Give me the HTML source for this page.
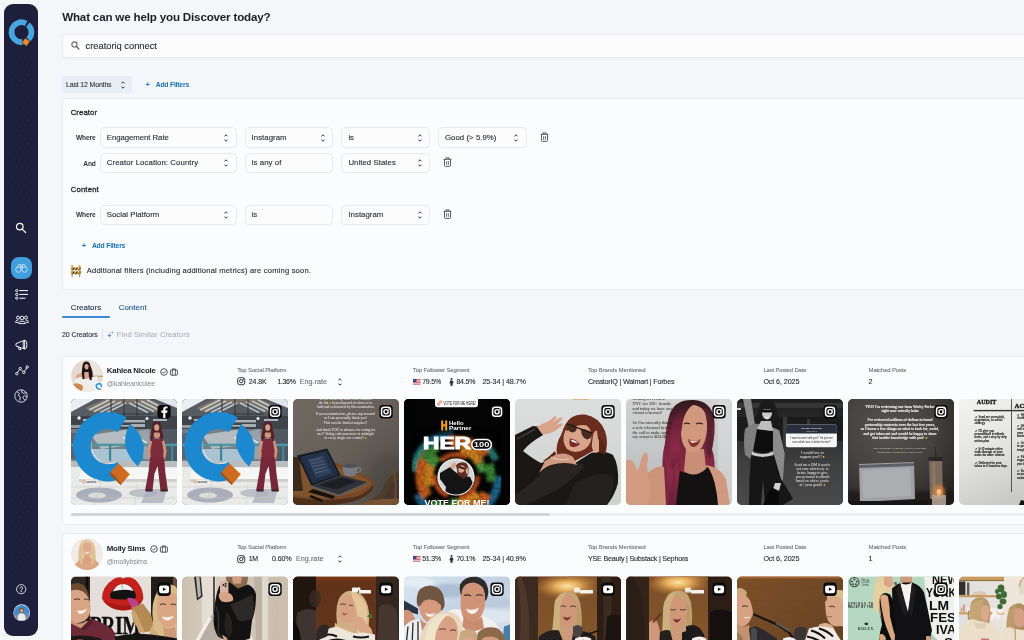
<!DOCTYPE html>
<html lang="en">
<head>
<meta charset="utf-8">
<title>Discover</title>
<style>
*{box-sizing:border-box;margin:0;padding:0}
html,body{width:1024px;height:640px;overflow:hidden;background:#f5f6fa}
body{font-family:"Liberation Sans",sans-serif;-webkit-font-smoothing:antialiased}
#app{will-change:transform;position:relative;width:1024px;height:640px;overflow:hidden;background:#f5f6fa}
.t{position:absolute;white-space:nowrap;-webkit-text-stroke:0.12px currentColor}
.b{position:absolute}
.sel{position:absolute;background:#fcfcfd;border:1px solid #e8eaee;border-radius:4.5px;box-shadow:0 0.5px 1px rgba(16,24,40,.025)}
.card{position:absolute;background:#fbfcfd;border:1px solid #e9ebef;border-radius:4px}
svg{position:absolute;overflow:visible}
.ph{position:absolute;width:106px;height:106.3px;border-radius:5px;overflow:hidden}
.ph svg{left:0;top:0}

</style>
</head>
<body>
<div id="app">
<div class="b" style="left:4px;top:4px;width:34.3px;height:632px;border-radius:9px;background:#1e1f3b"></div>
<svg style="left:4px;top:4px" width="34" height="632" viewBox="0 0 34 632">
<defs><pattern id="sdots" width="6" height="9" patternUnits="userSpaceOnUse" patternTransform="rotate(-8)"><circle cx="1.5" cy="1.5" r="0.45" fill="#3c5a56"/><circle cx="4.5" cy="6" r="0.45" fill="#3c5a56"/></pattern></defs>
<rect x="6" y="50" width="24" height="160" fill="url(#sdots)" opacity=".55"/>
<rect x="6" y="410" width="24" height="160" fill="url(#sdots)" opacity=".55"/>
</svg>
<svg style="left:0;top:0" width="40" height="50" viewBox="0 0 40 50" fill="none" stroke="#47a6e0" stroke-width="5.7">
<path d="M26.17 23.41 A9.95 9.95 0 1 0 22.54 42.10"/>
<path d="M27.90 24.58 A9.95 9.95 0 0 1 28.41 39.36"/>
<rect x="-3" y="-3" width="6" height="6" transform="translate(25.89 42.07) rotate(35)" fill="#f28a2c" stroke="#1e1f3b" stroke-width="0.5"/>
</svg>
<svg style="left:15.2px;top:222.1px" width="12" height="12" viewBox="0 0 12 12" fill="none" stroke="#fff" stroke-width="1.2" stroke-linecap="round">
<circle cx="4.8" cy="4.6" r="3.3"/><path d="M7.4 7.3 L10.6 10.5"/></svg>
<div class="b" style="left:10.8px;top:257.3px;width:21.3px;height:21.4px;border-radius:8px;background:#3f9edb"></div>
<svg style="left:15px;top:262.5px" width="13" height="11" viewBox="0 0 13 11" fill="none" stroke="#dcecf8" stroke-width="0.8">
<circle cx="3.4" cy="6.6" r="2.7"/><circle cx="9.6" cy="6.6" r="2.7"/><path d="M2.2 4.2 L3.8 1.4 L5.6 1.4 L5.9 5 M10.8 4.2 L9.2 1.4 L7.4 1.4 L7.1 5 M5.6 3 H7.4"/></svg>
<svg style="left:14.5px;top:288.5px" width="14" height="11" viewBox="0 0 14 11" fill="none" stroke="#fff" stroke-width="1">
<circle cx="1.7" cy="1.6" r="1.1"/><circle cx="1.7" cy="5.4" r="1.1"/><circle cx="1.7" cy="9.2" r="1.1"/>
<path d="M4.3 1.6 H13 M4.3 5.4 H13 M4.3 9.2 H10.5"/></svg>
<svg style="left:14.5px;top:314.5px" width="14" height="10" viewBox="0 0 14 10" fill="none" stroke="#fff" stroke-width="0.9">
<circle cx="7" cy="3" r="1.8"/><circle cx="3" cy="2.6" r="1.5"/><circle cx="11" cy="2.6" r="1.5"/>
<path d="M3.6 8.6 C3.6 5.4 10.4 5.4 10.4 8.6 Z M3.4 5.2 C1.4 5 0.6 6 0.6 7.4 H3.4 M10.6 5.2 C12.6 5 13.4 6 13.4 7.4 H10.6"/></svg>
<svg style="left:14.5px;top:339px" width="14" height="12" viewBox="0 0 14 12" fill="none" stroke="#fff" stroke-width="0.9" stroke-linejoin="round">
<path d="M1 4.6 L9.6 1.2 V10 L1 7 Z M3.2 7.8 L4 10.6 H5.8 L5.2 8.4"/><ellipse cx="10" cy="5.6" rx="1.9" ry="4.4"/></svg>
<svg style="left:14.5px;top:365px" width="14" height="11" viewBox="0 0 14 11" fill="none" stroke="#fff" stroke-width="0.9">
<circle cx="1.8" cy="8.6" r="1.2"/><circle cx="5.2" cy="3.6" r="1.2"/><circle cx="8.8" cy="7.4" r="1.2"/><circle cx="12.2" cy="2" r="1.2"/>
<path d="M2.5 7.6 L4.5 4.6 M6 4.5 L8 6.5 M9.5 6.4 L11.5 3"/></svg>
<svg style="left:14.3px;top:389.3px" width="14" height="14" viewBox="0 0 14 14" fill="none" stroke="#fff" stroke-width="0.8">
<circle cx="7" cy="7" r="6.2"/><path d="M3 2.6 L5.4 4.4 L4.2 6.4 L6.4 8 L5.6 11.6 M8.2 1 L7.6 3.2 L9.8 4.4 L12.4 3.6 M12.8 8 L10.4 6.6 L8.8 8.2 L10.2 10.6 L11.4 11"/></svg>
<svg style="left:16.3px;top:583.6px" width="11" height="11" viewBox="0 0 11 11" fill="none" stroke="#fff" stroke-width="0.8">
<circle cx="5.2" cy="5.2" r="4.6"/><path d="M3.9 4.1 C3.9 2.3 6.6 2.3 6.6 4.1 C6.6 5.2 5.2 5.2 5.2 6.4" stroke-linecap="round"/><circle cx="5.2" cy="7.8" r="0.3" fill="#fff"/></svg>
<svg style="left:12.7px;top:603.5px" width="18" height="18" viewBox="0 0 18 18">
<defs><clipPath id="uav"><circle cx="8.7" cy="8.7" r="7.8"/></clipPath></defs>
<circle cx="8.7" cy="8.7" r="8.4" fill="#e8eef5"/>
<g clip-path="url(#uav)"><rect width="18" height="18" fill="#3f8fd0"/><rect y="10" width="18" height="8" fill="#6c8fae"/>
<ellipse cx="8.6" cy="14" rx="4" ry="5" fill="#efe9e2"/><ellipse cx="8.7" cy="6.4" rx="2.4" ry="2.8" fill="#7a5a42"/><ellipse cx="8.7" cy="6.8" rx="1.5" ry="1.8" fill="#d9a98a"/></g></svg>
<div class="t " style="left:62.20px;top:9.00px;font-size:11.6px;line-height:16px;color:#1b1d21;font-weight:700;-webkit-text-stroke:0;letter-spacing:-0.174px;">What can we help you Discover today?</div>
<div class="sel" style="left:62px;top:34px;width:980px;height:23.5px;border-radius:4px"></div>
<svg style="left:70.6px;top:40.7px" width="9" height="9" viewBox="0 0 9 9" fill="none" stroke="#646b76" stroke-width="1.15" stroke-linecap="round">
<circle cx="3.4" cy="3.4" r="2.6"/><path d="M5.5 5.5 L7.9 7.9" stroke-width="1.4"/></svg>
<div class="t " style="left:85.60px;top:39.10px;font-size:9.4px;line-height:13px;color:#2a2e35;letter-spacing:-0.036px;">creatoriq connect</div>
<div class="b" style="left:62px;top:75.7px;width:69.5px;height:17.6px;border-radius:3px;background:#e9edf4"></div>
<div class="t " style="left:66.00px;top:79.50px;font-size:6.9px;line-height:10px;color:#30353d;letter-spacing:-0.120px;">Last 12 Months</div>
<svg style="left:120.2px;top:79.5px" width="6" height="10" viewBox="0 0 6 10" fill="none" stroke="#2f343b" stroke-width="1" stroke-linecap="round" stroke-linejoin="round"><path d="M1.75 3.05 L3 1.8 L4.25 3.05 M1.75 6.95 L3 8.2 L4.25 6.95"/></svg>
<div class="t " style="left:145.50px;top:78.80px;font-size:7.6px;line-height:11px;color:#1f7abf;font-weight:700;-webkit-text-stroke:0;">+</div>
<div class="t " style="left:155.70px;top:79.50px;font-size:6.8px;line-height:10px;color:#1873b6;font-weight:700;-webkit-text-stroke:0;letter-spacing:-0.201px;">Add Filters</div>
<div class="card" style="left:62px;top:98px;width:980px;height:191.5px"></div>
<div class="t " style="left:70.70px;top:106.80px;font-size:7.7px;line-height:11px;color:#1f2328;letter-spacing:0.118px;-webkit-text-stroke:0.3px currentColor;">Creator</div>
<div class="t " style="left:70.70px;top:184.40px;font-size:7.7px;line-height:11px;color:#1f2328;letter-spacing:0.190px;-webkit-text-stroke:0.3px currentColor;">Content</div>
<div class="t " style="left:75.90px;top:132.90px;font-size:6.6px;line-height:9px;color:#30343b;font-weight:700;-webkit-text-stroke:0;letter-spacing:-0.114px;">Where</div>
<div class="t " style="left:83.30px;top:158.80px;font-size:6.6px;line-height:9px;color:#30343b;font-weight:700;-webkit-text-stroke:0;letter-spacing:-0.177px;">And</div>
<div class="t " style="left:75.90px;top:210.30px;font-size:6.6px;line-height:9px;color:#30343b;font-weight:700;-webkit-text-stroke:0;letter-spacing:-0.114px;">Where</div>
<div class="sel" style="left:100.2px;top:127.35px;width:136.4px;height:20.3px"></div>
<div class="t " style="left:106.80px;top:132.10px;font-size:7.8px;line-height:11px;color:#2b2f36;letter-spacing:-0.059px;">Engagement Rate</div>
<svg style="left:223.40000000000003px;top:132.6px" width="6" height="10" viewBox="0 0 6 10" fill="none" stroke="#2f343b" stroke-width="1" stroke-linecap="round" stroke-linejoin="round"><path d="M1.75 3.05 L3 1.8 L4.25 3.05 M1.75 6.95 L3 8.2 L4.25 6.95"/></svg>
<div class="sel" style="left:245px;top:127.35px;width:87.8px;height:20.3px"></div>
<div class="t " style="left:251.60px;top:132.10px;font-size:7.8px;line-height:11px;color:#2b2f36;letter-spacing:0.035px;">Instagram</div>
<svg style="left:319.6px;top:132.6px" width="6" height="10" viewBox="0 0 6 10" fill="none" stroke="#2f343b" stroke-width="1" stroke-linecap="round" stroke-linejoin="round"><path d="M1.75 3.05 L3 1.8 L4.25 3.05 M1.75 6.95 L3 8.2 L4.25 6.95"/></svg>
<div class="sel" style="left:341.2px;top:127.35px;width:88.8px;height:20.3px"></div>
<div class="t " style="left:348.40px;top:132.10px;font-size:7.8px;line-height:11px;color:#2b2f36;letter-spacing:-0.017px;">is</div>
<svg style="left:416.8px;top:132.6px" width="6" height="10" viewBox="0 0 6 10" fill="none" stroke="#2f343b" stroke-width="1" stroke-linecap="round" stroke-linejoin="round"><path d="M1.75 3.05 L3 1.8 L4.25 3.05 M1.75 6.95 L3 8.2 L4.25 6.95"/></svg>
<div class="sel" style="left:437.8px;top:127.35px;width:88.8px;height:20.3px"></div>
<div class="t " style="left:445.00px;top:132.10px;font-size:7.8px;line-height:11px;color:#2b2f36;letter-spacing:0.043px;">Good (&gt; 5.9%)</div>
<svg style="left:513.4px;top:132.6px" width="6" height="10" viewBox="0 0 6 10" fill="none" stroke="#2f343b" stroke-width="1" stroke-linecap="round" stroke-linejoin="round"><path d="M1.75 3.05 L3 1.8 L4.25 3.05 M1.75 6.95 L3 8.2 L4.25 6.95"/></svg>
<svg style="left:539.5px;top:131.8px" width="9" height="10" viewBox="0 0 9 10" fill="none" stroke="#3a3f47" stroke-width="0.85" stroke-linejoin="round">
<path d="M0.6 2.3 H8.4 M3 2.2 V0.9 H6 V2.2 M1.5 2.4 V8.4 Q1.5 9.4 2.5 9.4 H6.5 Q7.5 9.4 7.5 8.4 V2.4"/><path d="M3.6 4.2 V7.8 M5.4 4.2 V7.8" stroke-width="0.75"/></svg>
<div class="sel" style="left:100.2px;top:152.80px;width:136.4px;height:20.3px"></div>
<div class="t " style="left:106.80px;top:156.85px;font-size:7.8px;line-height:11px;color:#2b2f36;letter-spacing:0.087px;">Creator Location: Country</div>
<svg style="left:223.40000000000003px;top:158.04999999999998px" width="6" height="10" viewBox="0 0 6 10" fill="none" stroke="#2f343b" stroke-width="1" stroke-linecap="round" stroke-linejoin="round"><path d="M1.75 3.05 L3 1.8 L4.25 3.05 M1.75 6.95 L3 8.2 L4.25 6.95"/></svg>
<div class="sel" style="left:245px;top:152.80px;width:87.8px;height:20.3px"></div>
<div class="t " style="left:251.60px;top:156.85px;font-size:7.8px;line-height:11px;color:#2b2f36;letter-spacing:0.106px;">is any of</div>
<div class="sel" style="left:341.2px;top:152.80px;width:88.8px;height:20.3px"></div>
<div class="t " style="left:348.40px;top:156.85px;font-size:7.8px;line-height:11px;color:#2b2f36;letter-spacing:0.052px;">United States</div>
<svg style="left:416.8px;top:158.04999999999998px" width="6" height="10" viewBox="0 0 6 10" fill="none" stroke="#2f343b" stroke-width="1" stroke-linecap="round" stroke-linejoin="round"><path d="M1.75 3.05 L3 1.8 L4.25 3.05 M1.75 6.95 L3 8.2 L4.25 6.95"/></svg>
<svg style="left:442.8px;top:157.25px" width="9" height="10" viewBox="0 0 9 10" fill="none" stroke="#3a3f47" stroke-width="0.85" stroke-linejoin="round">
<path d="M0.6 2.3 H8.4 M3 2.2 V0.9 H6 V2.2 M1.5 2.4 V8.4 Q1.5 9.4 2.5 9.4 H6.5 Q7.5 9.4 7.5 8.4 V2.4"/><path d="M3.6 4.2 V7.8 M5.4 4.2 V7.8" stroke-width="0.75"/></svg>
<div class="sel" style="left:100.2px;top:204.55px;width:136.4px;height:20.3px"></div>
<div class="t " style="left:106.80px;top:209.30px;font-size:7.8px;line-height:11px;color:#2b2f36;letter-spacing:0.003px;">Social Platform</div>
<svg style="left:223.40000000000003px;top:209.79999999999998px" width="6" height="10" viewBox="0 0 6 10" fill="none" stroke="#2f343b" stroke-width="1" stroke-linecap="round" stroke-linejoin="round"><path d="M1.75 3.05 L3 1.8 L4.25 3.05 M1.75 6.95 L3 8.2 L4.25 6.95"/></svg>
<div class="sel" style="left:245px;top:204.55px;width:87.8px;height:20.3px"></div>
<div class="t " style="left:251.60px;top:209.30px;font-size:7.8px;line-height:11px;color:#2b2f36;letter-spacing:-0.017px;">is</div>
<div class="sel" style="left:341.2px;top:204.55px;width:88.8px;height:20.3px"></div>
<div class="t " style="left:348.40px;top:209.30px;font-size:7.8px;line-height:11px;color:#2b2f36;letter-spacing:0.035px;">Instagram</div>
<svg style="left:416.8px;top:209.79999999999998px" width="6" height="10" viewBox="0 0 6 10" fill="none" stroke="#2f343b" stroke-width="1" stroke-linecap="round" stroke-linejoin="round"><path d="M1.75 3.05 L3 1.8 L4.25 3.05 M1.75 6.95 L3 8.2 L4.25 6.95"/></svg>
<svg style="left:442.8px;top:209.0px" width="9" height="10" viewBox="0 0 9 10" fill="none" stroke="#3a3f47" stroke-width="0.85" stroke-linejoin="round">
<path d="M0.6 2.3 H8.4 M3 2.2 V0.9 H6 V2.2 M1.5 2.4 V8.4 Q1.5 9.4 2.5 9.4 H6.5 Q7.5 9.4 7.5 8.4 V2.4"/><path d="M3.6 4.2 V7.8 M5.4 4.2 V7.8" stroke-width="0.75"/></svg>
<div class="t " style="left:81.70px;top:239.80px;font-size:7.6px;line-height:11px;color:#1f7abf;font-weight:700;-webkit-text-stroke:0;">+</div>
<div class="t " style="left:91.90px;top:240.50px;font-size:6.8px;line-height:10px;color:#1873b6;font-weight:700;-webkit-text-stroke:0;letter-spacing:-0.201px;">Add Filters</div>
<svg style="left:70.4px;top:264.6px" width="11.8" height="12.6" viewBox="0 0 11 12">
<rect x="0.6" y="2.4" width="9.8" height="2.6" fill="#f3b62e"/><rect x="0.6" y="6.2" width="9.8" height="2.6" fill="#f3b62e"/>
<path d="M1.6 5 L3.2 2.4 H4.6 L3 5 Z M4.6 5 L6.2 2.4 H7.6 L6 5 Z M7.6 5 L9.2 2.4 H10.4 L9 5 Z M1.6 8.8 L3.2 6.2 H4.6 L3 8.8 Z M4.6 8.8 L6.2 6.2 H7.6 L6 8.8 Z M7.6 8.8 L9.2 6.2 H10.4 L9 8.8 Z" fill="#3b2f1c"/>
<rect x="1.4" y="1.2" width="1" height="10.4" fill="#8a8d92"/><rect x="8.6" y="1.2" width="1" height="10.4" fill="#8a8d92"/>
<circle cx="1.9" cy="1" r="0.9" fill="#f0902a"/><circle cx="9.1" cy="1" r="0.9" fill="#f0902a"/></svg>
<div class="t " style="left:86.80px;top:265.40px;font-size:7.6px;line-height:11px;color:#2b2f36;letter-spacing:0.182px;">Additional filters (including additional metrics) are coming soon.</div>
<div class="t " style="left:70.70px;top:302.10px;font-size:7.9px;line-height:11px;color:#22364f;letter-spacing:0.026px;">Creators</div>
<div class="t " style="left:118.70px;top:302.00px;font-size:7.9px;line-height:11px;color:#1f5f8e;letter-spacing:0.047px;">Content</div>
<div class="b" style="left:62px;top:316.2px;width:48px;height:1.8px;background:#3a8dd2;border-radius:1px"></div>
<div class="t " style="left:62.00px;top:329.70px;font-size:6.9px;line-height:10px;color:#30353d;letter-spacing:-0.023px;">20 Creators</div>
<div class="b" style="left:102px;top:328px;width:1px;height:12.5px;background:#dfe2e7"></div>
<svg style="left:107px;top:330.5px" width="7" height="7" viewBox="0 0 7 7" fill="#5f86c6">
<path d="M2.4 2.2 L3 4 L4.8 4.6 L3 5.2 L2.4 7 L1.8 5.2 L0 4.6 L1.8 4 Z M5.2 0.2 L5.55 1.25 L6.6 1.6 L5.55 1.95 L5.2 3 L4.85 1.95 L3.8 1.6 L4.85 1.25 Z"/></svg>
<div class="t " style="left:116.70px;top:328.90px;font-size:7.6px;line-height:11px;color:#a3a8b0;-webkit-text-stroke:0;letter-spacing:0.077px;">Find Similar Creators</div>
<div class="card" style="left:62px;top:355.8px;width:980px;height:169.6px"></div>
<div class="card" style="left:62px;top:533.2px;width:980px;height:169.6px"></div>
<div class="t " style="left:106.80px;top:365.20px;font-size:7.9px;line-height:11px;color:#1d2025;font-weight:700;-webkit-text-stroke:0;letter-spacing:-0.216px;">Kahlea Nicole</div>
<svg style="left:159.7px;top:367.5px" width="18" height="8" viewBox="0 0 18 8" fill="none" stroke="#2b2f36" stroke-width="0.8"><circle cx="4" cy="4" r="3.3"/><path d="M2.5 4.1 L3.6 5.2 L5.6 3" stroke-linecap="round"/><rect x="10.4" y="1.9" width="7" height="5.3" rx="0.8"/><path d="M12.6 1.9 V0.8 H15.2 V1.9 M12.4 1.9 V7.2 M15.4 1.9 V7.2" stroke-width="0.7"/></svg>
<div class="t " style="left:106.80px;top:379.00px;font-size:7.1px;line-height:10px;color:#858a93;-webkit-text-stroke:0;letter-spacing:-0.166px;">@kahleanicolee</div>
<div class="t " style="left:237.20px;top:366.10px;font-size:6.0px;line-height:8px;color:#727780;letter-spacing:-0.126px;">Top Social Platform</div>
<svg style="left:236.8px;top:377.40000000000003px" width="8.4" height="8.4" viewBox="0 0 10 10" fill="none" stroke="#2b2f36" stroke-width="1.15"><rect x="0.8" y="0.8" width="8.4" height="8.4" rx="2.4"/><circle cx="5" cy="5" r="2"/><circle cx="7.4" cy="2.6" r="0.35" fill="#2b2f36"/></svg>
<div class="t " style="left:248.80px;top:376.60px;font-size:7.0px;line-height:10px;color:#2b2f36;letter-spacing:-0.099px;">24.8K</div>
<div class="t " style="left:277.50px;top:376.60px;font-size:7.0px;line-height:10px;color:#2b2f36;letter-spacing:-0.370px;">1.36%</div>
<div class="t " style="left:299.70px;top:376.60px;font-size:7.2px;line-height:10px;color:#6a7079;letter-spacing:0.035px;">Eng.rate</div>
<svg style="left:336.7px;top:376.6px" width="6" height="10" viewBox="0 0 6 10" fill="none" stroke="#2f343b" stroke-width="1" stroke-linecap="round" stroke-linejoin="round"><path d="M1.75 3.05 L3 1.8 L4.25 3.05 M1.75 6.95 L3 8.2 L4.25 6.95"/></svg>
<div class="t " style="left:412.80px;top:366.10px;font-size:6.0px;line-height:8px;color:#727780;letter-spacing:-0.160px;">Top Follower Segment</div>
<svg style="left:412.8px;top:378.8px" width="7.6" height="5.6" viewBox="0 0 7.6 5.6"><rect width="7.6" height="5.6" fill="#f3f1f0"/><path d="M0 0.4 H7.6 M0 2 H7.6 M0 3.6 H7.6 M0 5.2 H7.6" stroke="#c8394b" stroke-width="0.8"/><rect width="3.4" height="3" fill="#3b4a86"/></svg>
<div class="t " style="left:422.20px;top:376.60px;font-size:7.0px;line-height:10px;color:#2b2f36;letter-spacing:-0.230px;">79.5%</div>
<svg style="left:449.3px;top:377.6px" width="5" height="8" viewBox="0 0 5 8" fill="#2b2f36"><circle cx="2.5" cy="1" r="1"/><path d="M1.2 2.4 H3.8 L4.6 5.2 H3.6 V7.8 H1.4 V5.2 H0.4 Z"/></svg>
<div class="t " style="left:456.40px;top:376.60px;font-size:7.0px;line-height:10px;color:#2b2f36;letter-spacing:-0.210px;">84.5%</div>
<div class="t " style="left:482.40px;top:376.60px;font-size:7.2px;line-height:10px;color:#2b2f36;letter-spacing:-0.092px;">25-34 | 48.7%</div>
<div class="t " style="left:588.00px;top:366.10px;font-size:6.0px;line-height:8px;color:#727780;letter-spacing:-0.127px;">Top Brands Mentioned</div>
<div class="t " style="left:588.00px;top:376.60px;font-size:7.2px;line-height:10px;color:#2b2f36;letter-spacing:-0.207px;">CreatorIQ | Walmart | Forbes</div>
<div class="t " style="left:763.40px;top:366.10px;font-size:6.0px;line-height:8px;color:#727780;letter-spacing:-0.189px;">Last Posted Date</div>
<div class="t " style="left:763.40px;top:376.60px;font-size:7.2px;line-height:10px;color:#2b2f36;letter-spacing:-0.111px;">Oct 6, 2025</div>
<div class="t " style="left:868.60px;top:366.10px;font-size:6.0px;line-height:8px;color:#727780;letter-spacing:-0.160px;">Matched Posts</div>
<div class="t " style="left:868.60px;top:376.60px;font-size:7.2px;line-height:10px;color:#2b2f36;">2</div>
<div class="t " style="left:106.80px;top:543.10px;font-size:7.9px;line-height:11px;color:#1d2025;font-weight:700;-webkit-text-stroke:0;letter-spacing:-0.257px;">Molly Sims</div>
<svg style="left:149.8px;top:545.4000000000001px" width="18" height="8" viewBox="0 0 18 8" fill="none" stroke="#2b2f36" stroke-width="0.8"><circle cx="4" cy="4" r="3.3"/><path d="M2.5 4.1 L3.6 5.2 L5.6 3" stroke-linecap="round"/><rect x="10.4" y="1.9" width="7" height="5.3" rx="0.8"/><path d="M12.6 1.9 V0.8 H15.2 V1.9 M12.4 1.9 V7.2 M15.4 1.9 V7.2" stroke-width="0.7"/></svg>
<div class="t " style="left:106.80px;top:556.90px;font-size:7.1px;line-height:10px;color:#858a93;-webkit-text-stroke:0;letter-spacing:-0.183px;">@mollybsims</div>
<div class="t " style="left:237.20px;top:543.30px;font-size:6.0px;line-height:8px;color:#727780;letter-spacing:-0.126px;">Top Social Platform</div>
<svg style="left:236.8px;top:554.5999999999999px" width="8.4" height="8.4" viewBox="0 0 10 10" fill="none" stroke="#2b2f36" stroke-width="1.15"><rect x="0.8" y="0.8" width="8.4" height="8.4" rx="2.4"/><circle cx="5" cy="5" r="2"/><circle cx="7.4" cy="2.6" r="0.35" fill="#2b2f36"/></svg>
<div class="t " style="left:248.80px;top:553.80px;font-size:7.0px;line-height:10px;color:#2b2f36;letter-spacing:-0.562px;">1M</div>
<div class="t " style="left:272.00px;top:553.80px;font-size:7.0px;line-height:10px;color:#2b2f36;letter-spacing:-0.050px;">0.60%</div>
<div class="t " style="left:296.00px;top:553.80px;font-size:7.2px;line-height:10px;color:#6a7079;letter-spacing:0.035px;">Eng.rate</div>
<svg style="left:336.7px;top:553.8px" width="6" height="10" viewBox="0 0 6 10" fill="none" stroke="#2f343b" stroke-width="1" stroke-linecap="round" stroke-linejoin="round"><path d="M1.75 3.05 L3 1.8 L4.25 3.05 M1.75 6.95 L3 8.2 L4.25 6.95"/></svg>
<div class="t " style="left:412.80px;top:543.30px;font-size:6.0px;line-height:8px;color:#727780;letter-spacing:-0.160px;">Top Follower Segment</div>
<svg style="left:412.8px;top:556.0px" width="7.6" height="5.6" viewBox="0 0 7.6 5.6"><rect width="7.6" height="5.6" fill="#f3f1f0"/><path d="M0 0.4 H7.6 M0 2 H7.6 M0 3.6 H7.6 M0 5.2 H7.6" stroke="#c8394b" stroke-width="0.8"/><rect width="3.4" height="3" fill="#3b4a86"/></svg>
<div class="t " style="left:422.20px;top:553.80px;font-size:7.0px;line-height:10px;color:#2b2f36;letter-spacing:-0.230px;">51.3%</div>
<svg style="left:449.3px;top:554.8px" width="5" height="8" viewBox="0 0 5 8" fill="#2b2f36"><circle cx="2.5" cy="1" r="1"/><path d="M1.2 2.4 H3.8 L4.6 5.2 H3.6 V7.8 H1.4 V5.2 H0.4 Z"/></svg>
<div class="t " style="left:456.40px;top:553.80px;font-size:7.0px;line-height:10px;color:#2b2f36;letter-spacing:-0.210px;">70.1%</div>
<div class="t " style="left:482.40px;top:553.80px;font-size:7.2px;line-height:10px;color:#2b2f36;letter-spacing:-0.092px;">25-34 | 40.9%</div>
<div class="t " style="left:588.00px;top:543.30px;font-size:6.0px;line-height:8px;color:#727780;letter-spacing:-0.127px;">Top Brands Mentioned</div>
<div class="t " style="left:588.00px;top:553.80px;font-size:7.2px;line-height:10px;color:#2b2f36;letter-spacing:-0.239px;">YSE Beauty | Substack | Sephora</div>
<div class="t " style="left:763.40px;top:543.30px;font-size:6.0px;line-height:8px;color:#727780;letter-spacing:-0.189px;">Last Posted Date</div>
<div class="t " style="left:763.40px;top:553.80px;font-size:7.2px;line-height:10px;color:#2b2f36;letter-spacing:-0.111px;">Oct 6, 2025</div>
<div class="t " style="left:868.60px;top:543.30px;font-size:6.0px;line-height:8px;color:#727780;letter-spacing:-0.160px;">Matched Posts</div>
<div class="t " style="left:868.60px;top:553.80px;font-size:7.2px;line-height:10px;color:#2b2f36;">1</div>
<div class="b" style="left:71px;top:513px;width:971px;height:2.6px;border-radius:1.3px;background:#eceef1"></div>
<div class="b" style="left:71px;top:513px;width:478.5px;height:2.6px;border-radius:1.3px;background:#d0d3d8"></div>
<svg width="0" height="0" style="left:0;top:0"><defs>
<filter id="b1" x="-20%" y="-20%" width="140%" height="140%"><feGaussianBlur stdDeviation="0.6"/></filter>
<filter id="b2" x="-30%" y="-30%" width="160%" height="160%"><feGaussianBlur stdDeviation="1.4"/></filter>
<filter id="b3" x="-40%" y="-40%" width="180%" height="180%"><feGaussianBlur stdDeviation="3"/></filter>
<filter id="b4" x="-50%" y="-50%" width="200%" height="200%"><feGaussianBlur stdDeviation="6"/></filter>
</defs></svg>
<div class="ph" style="left:71px;top:399px;background:#9aa3ab"><svg width="106" height="106" viewBox="0 0 106 106"><rect width="106" height="106" fill="#8d979f"/>
<rect width="106" height="40" fill="#565c63"/>
<path d="M0 0 H24 L0 13 Z" fill="#e9eef2"/>
<path d="M84 0 H106 V9 Z" fill="#dfe6ea"/>
<path d="M14 9 L34 0 H78 L100 10 L88 15 L70 5 H42 L24 14 Z" fill="#7d7467"/>
<g stroke="#d3dadf" stroke-width="1.5" opacity=".85"><path d="M18 11 L38 1 M23 12.5 L44 2 M29 13.5 L50 3 M35 14 L55 4 M58 4 L77 13.5 M64 3 L83 12.5 M70 2 L89 11.5 M76 1 L95 10.5"/></g>
<g stroke="#33373c" stroke-width="1.1"><path d="M40 0 V17 M53 0 V19 M66 0 V17 M28 15 H82"/></g>
<rect x="0" y="17" width="106" height="15" fill="#3f444b"/>
<g fill="#c9d0d5" opacity=".8"><rect x="12" y="20" width="20" height="2"/><rect x="44" y="21" width="30" height="2.4"/><rect x="82" y="20" width="14" height="2"/><rect x="20" y="26" width="40" height="1.6"/></g>
<g fill="#f0f3f5"><circle cx="8" cy="19" r="1.7"/><circle cx="76" cy="19.5" r="1.5"/><rect x="60" y="25" width="14" height="3" opacity=".6"/><rect x="0" y="26" width="10" height="3" opacity=".5"/></g>
<rect x="0" y="30" width="106" height="34" fill="#747e86"/>
<g filter="url(#b1)">
<path d="M20 36 L60 30 L78 44 L30 50 Z" fill="#b4bcc2"/>
<path d="M0 34 H18 V60 H0 Z" fill="#5b646c"/>
<path d="M58 34 L78 30 L80 60 L60 60 Z" fill="#98a2a9"/>
<rect x="92" y="30" width="14" height="32" fill="#4f5860"/>
<rect x="20" y="50" width="50" height="12" fill="#a9c3d3"/>
<path d="M60 34 L76 44 M56 36 L72 46 M52 38 L68 48" stroke="#eef2f4" stroke-width="1.2"/>
</g>
<rect x="0" y="44.6" width="106" height="2.6" fill="#4f97a4"/>
<g fill="#3f8794"><rect x="38" y="46" width="2.2" height="18"/><rect x="70" y="46" width="2.2" height="18"/><rect x="100" y="46" width="2.4" height="18"/><rect x="14" y="46" width="2" height="18"/></g>
<rect x="0" y="62" width="106" height="44" fill="#e9e9e7"/>
<rect x="0" y="62" width="106" height="6" fill="#b9bdbf"/>
<path d="M10 69 H106 V80 H8 Z" fill="#f6f6f4"/>
<path d="M8 80 H106 V83 H8 Z" fill="#cfcfcd"/>
<g filter="url(#b1)" fill="#a9aebb">
<ellipse cx="28" cy="96" rx="23" ry="7.5"/>
<ellipse cx="72" cy="94" rx="14" ry="4" opacity=".7"/>
<path d="M76 90 L96 90 L92 104 L70 104 Z" opacity=".75"/>
</g>
<ellipse cx="26" cy="96.5" rx="9" ry="3" fill="#dbdbd8" filter="url(#b1)"/>
<g stroke="#c4c4c0" stroke-width=".5"><path d="M0 88 H106 M0 99 H106 M30 84 L24 106 M66 84 L64 106"/></g>
<!-- big C -->
<path d="M55.8 18.6 A34.7 34.7 0 1 0 54.5 77.6 L46 62.6 A17.6 17.6 0 1 1 46.6 32.9 Z" fill="#1c88d0"/>
<path d="M45.8 62.3 A17.4 17.4 0 0 1 21.6 40 A19 19 0 0 0 45 64 Z" fill="#eaf3fa" opacity=".9"/>
<path d="M59 25 Q70 33 72.8 47 Q73 58 67 67.6 Q57 58 54.2 47 Q53.6 36 59 25 Z" fill="#1c88d0"/>
<path d="M59 25 Q53.6 36 54.2 47 Q52.6 36 59 25 Z" fill="#1576b8"/>
<path d="M47.6 64.4 L58.8 75.2 L51 84.6 L39.4 73 Z" fill="#cf6a1e"/>
<path d="M39.4 73 L51 84.6 L49.6 86 L38.4 75 Z" fill="#a84f12"/>
<rect x="11" y="80.5" width="16" height="4" fill="#efefec"/>
<circle cx="13" cy="82.4" r="1.4" fill="none" stroke="#d2792e" stroke-width=".7"/>
<text x="15.4" y="83.6" font-size="2.6" font-weight="700" fill="#33475a" font-family="Liberation Sans, sans-serif">connect</text>
<!-- woman -->
<g>
<path d="M81.4 29 Q80.6 22.4 85.6 22.2 Q90.8 22.4 90.2 29 Q92.8 35 92.2 43 L89 39 H82.6 L79.4 43 Q79 35 81.4 29 Z" fill="#55222a"/>
<ellipse cx="85.7" cy="28.6" rx="2.5" ry="3.3" fill="#cfa08c"/>
<path d="M79.4 38.4 Q85.6 41.6 92.2 38.4 L94.4 52 L93.2 60 Q86 62 78.8 60 L77.8 52 Z" fill="#7b2b3a"/>
<path d="M82.6 37.4 Q85.8 40.6 89.2 37.4 L88.6 33.4 H83 Z" fill="#c9957f"/>
<path d="M78.8 39.4 L76.2 52 L77.6 61 L79.8 60.6 L79.4 52 L81.2 42 Z M92.8 39.4 L95.6 52 L94 61 L92 60.6 L92.6 52 L90.8 42 Z" fill="#c9957f"/>
<path d="M79 58 Q86 60.6 93 58 L94.4 74 L96.8 91 H89.4 L86.6 67 L83.4 75 L81.6 91 H74.2 L77.6 72 Z" fill="#762838"/>
<path d="M74.4 90.6 H81.6 V92.4 H74.6 Z M89.4 90.6 H96.8 V92.4 H89.6 Z" fill="#3a2424"/>
<path d="M81.2 30 Q81.6 36 80.2 42 M90.4 30 Q90.2 36 91.6 42" stroke="#55222a" stroke-width="1.9" fill="none"/>
</g>
<rect x="86.4" y="6.1" width="13.3" height="13.3" rx="3.4" fill="#0b0b0c"/><path d="M94.4 18.9 V13.7 H96.2 L96.5 11.6 H94.4 V10.3 Q94.4 9.3 95.5 9.3 H96.6 V7.5 Q95.8 7.4 94.9 7.4 Q92.2 7.4 92.2 10.2 V11.6 H90.3 V13.7 H92.2 V18.9 Z" fill="#fff"/></svg></div>
<div class="ph" style="left:182px;top:399px;background:#9aa3ab"><svg width="106" height="106" viewBox="0 0 106 106"><rect width="106" height="106" fill="#8d979f"/>
<rect width="106" height="40" fill="#565c63"/>
<path d="M0 0 H24 L0 13 Z" fill="#e9eef2"/>
<path d="M84 0 H106 V9 Z" fill="#dfe6ea"/>
<path d="M14 9 L34 0 H78 L100 10 L88 15 L70 5 H42 L24 14 Z" fill="#7d7467"/>
<g stroke="#d3dadf" stroke-width="1.5" opacity=".85"><path d="M18 11 L38 1 M23 12.5 L44 2 M29 13.5 L50 3 M35 14 L55 4 M58 4 L77 13.5 M64 3 L83 12.5 M70 2 L89 11.5 M76 1 L95 10.5"/></g>
<g stroke="#33373c" stroke-width="1.1"><path d="M40 0 V17 M53 0 V19 M66 0 V17 M28 15 H82"/></g>
<rect x="0" y="17" width="106" height="15" fill="#3f444b"/>
<g fill="#c9d0d5" opacity=".8"><rect x="12" y="20" width="20" height="2"/><rect x="44" y="21" width="30" height="2.4"/><rect x="82" y="20" width="14" height="2"/><rect x="20" y="26" width="40" height="1.6"/></g>
<g fill="#f0f3f5"><circle cx="8" cy="19" r="1.7"/><circle cx="76" cy="19.5" r="1.5"/><rect x="60" y="25" width="14" height="3" opacity=".6"/><rect x="0" y="26" width="10" height="3" opacity=".5"/></g>
<rect x="0" y="30" width="106" height="34" fill="#747e86"/>
<g filter="url(#b1)">
<path d="M20 36 L60 30 L78 44 L30 50 Z" fill="#b4bcc2"/>
<path d="M0 34 H18 V60 H0 Z" fill="#5b646c"/>
<path d="M58 34 L78 30 L80 60 L60 60 Z" fill="#98a2a9"/>
<rect x="92" y="30" width="14" height="32" fill="#4f5860"/>
<rect x="20" y="50" width="50" height="12" fill="#a9c3d3"/>
<path d="M60 34 L76 44 M56 36 L72 46 M52 38 L68 48" stroke="#eef2f4" stroke-width="1.2"/>
</g>
<rect x="0" y="44.6" width="106" height="2.6" fill="#4f97a4"/>
<g fill="#3f8794"><rect x="38" y="46" width="2.2" height="18"/><rect x="70" y="46" width="2.2" height="18"/><rect x="100" y="46" width="2.4" height="18"/><rect x="14" y="46" width="2" height="18"/></g>
<rect x="0" y="62" width="106" height="44" fill="#e9e9e7"/>
<rect x="0" y="62" width="106" height="6" fill="#b9bdbf"/>
<path d="M10 69 H106 V80 H8 Z" fill="#f6f6f4"/>
<path d="M8 80 H106 V83 H8 Z" fill="#cfcfcd"/>
<g filter="url(#b1)" fill="#a9aebb">
<ellipse cx="28" cy="96" rx="23" ry="7.5"/>
<ellipse cx="72" cy="94" rx="14" ry="4" opacity=".7"/>
<path d="M76 90 L96 90 L92 104 L70 104 Z" opacity=".75"/>
</g>
<ellipse cx="26" cy="96.5" rx="9" ry="3" fill="#dbdbd8" filter="url(#b1)"/>
<g stroke="#c4c4c0" stroke-width=".5"><path d="M0 88 H106 M0 99 H106 M30 84 L24 106 M66 84 L64 106"/></g>
<!-- big C -->
<path d="M55.8 18.6 A34.7 34.7 0 1 0 54.5 77.6 L46 62.6 A17.6 17.6 0 1 1 46.6 32.9 Z" fill="#1c88d0"/>
<path d="M45.8 62.3 A17.4 17.4 0 0 1 21.6 40 A19 19 0 0 0 45 64 Z" fill="#eaf3fa" opacity=".9"/>
<path d="M59 25 Q70 33 72.8 47 Q73 58 67 67.6 Q57 58 54.2 47 Q53.6 36 59 25 Z" fill="#1c88d0"/>
<path d="M59 25 Q53.6 36 54.2 47 Q52.6 36 59 25 Z" fill="#1576b8"/>
<path d="M47.6 64.4 L58.8 75.2 L51 84.6 L39.4 73 Z" fill="#cf6a1e"/>
<path d="M39.4 73 L51 84.6 L49.6 86 L38.4 75 Z" fill="#a84f12"/>
<rect x="11" y="80.5" width="16" height="4" fill="#efefec"/>
<circle cx="13" cy="82.4" r="1.4" fill="none" stroke="#d2792e" stroke-width=".7"/>
<text x="15.4" y="83.6" font-size="2.6" font-weight="700" fill="#33475a" font-family="Liberation Sans, sans-serif">connect</text>
<!-- woman -->
<g>
<path d="M81.4 29 Q80.6 22.4 85.6 22.2 Q90.8 22.4 90.2 29 Q92.8 35 92.2 43 L89 39 H82.6 L79.4 43 Q79 35 81.4 29 Z" fill="#55222a"/>
<ellipse cx="85.7" cy="28.6" rx="2.5" ry="3.3" fill="#cfa08c"/>
<path d="M79.4 38.4 Q85.6 41.6 92.2 38.4 L94.4 52 L93.2 60 Q86 62 78.8 60 L77.8 52 Z" fill="#7b2b3a"/>
<path d="M82.6 37.4 Q85.8 40.6 89.2 37.4 L88.6 33.4 H83 Z" fill="#c9957f"/>
<path d="M78.8 39.4 L76.2 52 L77.6 61 L79.8 60.6 L79.4 52 L81.2 42 Z M92.8 39.4 L95.6 52 L94 61 L92 60.6 L92.6 52 L90.8 42 Z" fill="#c9957f"/>
<path d="M79 58 Q86 60.6 93 58 L94.4 74 L96.8 91 H89.4 L86.6 67 L83.4 75 L81.6 91 H74.2 L77.6 72 Z" fill="#762838"/>
<path d="M74.4 90.6 H81.6 V92.4 H74.6 Z M89.4 90.6 H96.8 V92.4 H89.6 Z" fill="#3a2424"/>
<path d="M81.2 30 Q81.6 36 80.2 42 M90.4 30 Q90.2 36 91.6 42" stroke="#55222a" stroke-width="1.9" fill="none"/>
</g>
<rect x="86.4" y="6.1" width="13.3" height="13.3" rx="3.4" fill="#0b0b0c"/><rect x="88.55" y="8.25" width="9" height="9" rx="2.7" fill="none" stroke="#fff" stroke-width="1.5"/><circle cx="93.05" cy="12.75" r="2.1" fill="none" stroke="#fff" stroke-width="1.4"/><circle cx="95.75" cy="10.05" r="0.65" fill="#fff"/></svg></div>
<div class="ph" style="left:293px;top:399px;background:#5f5952"><svg width="106" height="106" viewBox="0 0 106 106"><defs><linearGradient id="g13" x1="0" y1="0" x2="1" y2="1"><stop offset="0" stop-color="#6f6962"/><stop offset=".5" stop-color="#655f58"/><stop offset="1" stop-color="#524c46"/></linearGradient></defs>
<rect width="106" height="106" fill="url(#g13)"/>
<ellipse cx="96" cy="84" rx="22" ry="30" fill="#433e39" opacity=".4" filter="url(#b4)"/>
<!-- table -->
<path d="M0 62 Q40 54 80 82 Q84 92 60 100 Q30 110 0 104 Z" fill="#74492a"/>
<path d="M0 66 Q40 58 78 84 Q70 94 40 98 Q20 100 0 96 Z" fill="#80552f" filter="url(#b1)"/>
<path d="M0 98 Q30 104 62 98 Q74 94 80 86 Q82 94 62 102 Q30 110 0 106 Z" fill="#4d2f1a"/>
<path d="M0 58 H6 L10 92 H0 Z" fill="#3c2a1e"/>
<!-- chair -->
<path d="M106 72 Q92 78 88 94 Q80 101 70 106 H106 Z" fill="#4f3a2a" filter="url(#b1)"/>
<path d="M106 80 Q97 84 93 96 Q91 101 86 106 H106 Z" fill="#453730"/>
<path d="M66 105 Q82 99 106 100 V106 H66 Z" fill="#7a5232"/>
<path d="M100 70 Q104 84 102 100" stroke="#6a4a2e" stroke-width="2" fill="none" filter="url(#b1)"/>
<!-- mug -->
<path d="M49.6 67 Q57 64.6 64.4 67 Q64.6 73 62 76.4 Q57 78 52 76.4 Q49.4 73 49.6 67 Z" fill="#767b82"/>
<ellipse cx="57" cy="67" rx="7.4" ry="1.9" fill="#4d5157"/>
<path d="M64 69 Q68.6 68.4 67.6 71.6 Q66.6 74 63 73.6" fill="none" stroke="#767b82" stroke-width="1.3"/>
<!-- laptop -->
<path d="M4 56.6 L34.3 49.4 L47.7 76.2 L18.3 86.8 Z" fill="#151b25"/>
<path d="M6.6 58 L33.4 51.6 L45.6 75.6 L19.4 84.6 Z" fill="#222f44"/>
<path d="M14 60 L30 56.4 L39 74 L23.6 79 Z" fill="#34455f" opacity=".8"/>
<g stroke="#6f84a3" stroke-width=".6" opacity=".8"><path d="M16 62 L28 59.2 M17.6 65 L30 62 M19 68 L31.6 65 M20.6 71 L33 68 M22 74 L34.6 71"/></g>
<path d="M18.3 86.8 L47.7 76.2 L74.4 83.3 L45.9 95.7 Z" fill="#30343a"/>
<path d="M26 86 L47.6 78.4 L64 82.6 L42.6 90.6 Z" fill="#1c1f24"/>
<path d="M18.3 86.8 L45.9 95.7 L74.4 83.3 L74.4 84.6 L45.9 97.2 L18.3 88.2 Z" fill="#585d64"/>
<path d="M15 93 L40 100 L42 97 L20 90 Z M18 96 L30 101 L29 103 L16 98 Z" fill="#15110e"/>
<!-- caption text -->
<g font-family="Liberation Serif, serif" font-size="3.55" fill="#f6f4f0" text-anchor="middle">
<text x="52.6" y="1.2">so I'm on the top-three Hero shortlist</text>
<text x="52.6" y="5.1">the list <tspan fill="#f2c230" stroke="none">●</tspan> beyond proud of what we've</text>
<text x="52.6" y="9">built and so honored by this nomination.</text>
<text x="52.6" y="16.3">If you nominated me, please step forward</text>
<text x="52.6" y="20.3">so I can personally thank you!</text>
<text x="52.6" y="24.6">This was the kindest surprise!!</text>
<text x="52.6" y="32.3">And thank YOU in advance for voting for</text>
<text x="52.6" y="36.3">me!! Voting ends tomorrow at midnight</text>
<text x="52.6" y="40.4">so every single one counts!! <tspan fill="#f2c230" stroke="none">●</tspan></text>
</g>
<rect x="86.4" y="6.1" width="13.3" height="13.3" rx="3.4" fill="#0b0b0c"/><rect x="88.55" y="8.25" width="9" height="9" rx="2.7" fill="none" stroke="#fff" stroke-width="1.5"/><circle cx="93.05" cy="12.75" r="2.1" fill="none" stroke="#fff" stroke-width="1.4"/><circle cx="95.75" cy="10.05" r="0.65" fill="#fff"/></svg></div>
<div class="ph" style="left:404px;top:399px;background:#050505"><svg width="106" height="106" viewBox="0 0 106 106"><defs>
<radialGradient id="g14" cx="52" cy="77" r="54" gradientUnits="userSpaceOnUse"><stop offset=".3" stop-color="#000" stop-opacity="0"/><stop offset=".82" stop-color="#000" stop-opacity=".1"/><stop offset="1" stop-color="#000" stop-opacity=".9"/></radialGradient>
<filter id="n14" x="0" y="0" width="100%" height="100%"><feTurbulence type="fractalNoise" baseFrequency=".35" numOctaves="2" seed="4"/><feColorMatrix values="0 0 0 0 0  0 0 0 0 0  0 0 0 0 0  0 0 0 -1.6 1.1"/><feComposite in2="SourceGraphic" operator="in"/></filter>
<clipPath id="c14"><circle cx="52" cy="78" r="17.6"/></clipPath>
</defs>
<rect width="106" height="106" fill="#040404"/>
<g filter="url(#b2)">
<circle cx="52" cy="77" r="43" fill="none" stroke="#1b6f98" stroke-width="9" stroke-dasharray="46 30 40 34 50 70.2"/>
<circle cx="52" cy="77" r="43" fill="none" stroke="#2a8f86" stroke-width="7" stroke-dasharray="26 64 30 60 24 66.2" transform="rotate(66 52 77)"/>
<circle cx="52" cy="77" r="35" fill="none" stroke="#d8661c" stroke-width="11" stroke-dasharray="50 20 46 24 40 39.9" transform="rotate(30 52 77)"/>
<circle cx="52" cy="77" r="35" fill="none" stroke="#3c8c38" stroke-width="9" stroke-dasharray="18 52 22 46 20 61.9" transform="rotate(-20 52 77)"/>
<circle cx="52" cy="77" r="27" fill="none" stroke="#4c9a3e" stroke-width="9" stroke-dasharray="34 22 30 26 32 25.6" transform="rotate(-80 52 77)"/>
<circle cx="52" cy="77" r="27" fill="none" stroke="#e08a22" stroke-width="8" stroke-dasharray="20 36 24 32 22 35.6" transform="rotate(160 52 77)"/>
<circle cx="52" cy="77" r="21.5" fill="none" stroke="#c2501a" stroke-width="5" stroke-dasharray="30 12 26 16 28 23"/>
</g>
<rect width="106" height="106" fill="#000" filter="url(#n14)" opacity=".36"/>
<rect width="106" height="106" fill="url(#g14)"/>
<rect x="0" y="0" width="106" height="26" fill="#040404"/>
<rect x="0" y="26" width="106" height="10" fill="#040404" opacity=".5"/>
<rect x="0" y="0" width="8" height="106" fill="#040404" opacity=".8"/>
<rect x="97" y="0" width="9" height="106" fill="#040404" opacity=".8"/>
<!-- top pill -->
<rect x="31" y="-3" width="43" height="11.2" rx="2.4" fill="#fbfbfb"/>
<path d="M34.4 5.2 L36.6 3 M35.2 2.6 Q36.6 1.2 37.6 2.2 Q38.4 3 37.2 4.2 M35.8 5.6 Q34.6 6.8 33.6 5.8 Q32.8 5 34 3.8" stroke="#e0683a" stroke-width=".8" fill="none" stroke-linecap="round"/>
<text x="39.4" y="6" font-family="Liberation Sans, sans-serif" font-size="4.7" fill="#222" textLength="32.4" lengthAdjust="spacingAndGlyphs">VOTE FOR ME HERE!</text>
<!-- Hello partner -->
<path d="M37.2 21.4 H39.2 V25 H41.2 V21.4 H43.2 V31.4 H41.2 V27.4 H39.2 V31.4 H37.2 Z" fill="#f2a51e"/>
<path d="M39.2 25 H41.2 V27.4 H39.2 Z" fill="#e26a1e"/>
<g font-family="Liberation Sans, sans-serif" font-weight="700" font-size="5.4" fill="#fff"><text x="45" y="25.8" textLength="14.6" lengthAdjust="spacingAndGlyphs">Hello</text><text x="45" y="31.2" textLength="22.4" lengthAdjust="spacingAndGlyphs">Partner</text></g>
<!-- HER 100 -->
<text x="19" y="50.4" font-family="Liberation Sans, sans-serif" font-weight="700" font-size="17.4" fill="#fff" stroke="#fff" stroke-width="1" textLength="48" lengthAdjust="spacingAndGlyphs">HER</text>
<rect x="67.8" y="40.6" width="19.6" height="9.8" rx="4.9" fill="#0a0a0a" stroke="#fff" stroke-width="1.5"/>
<text x="69.8" y="48.1" font-family="Liberation Sans, sans-serif" font-weight="700" font-size="7" fill="#fff" textLength="15.6" lengthAdjust="spacingAndGlyphs">100</text>
<!-- circle portrait -->
<circle cx="52" cy="78" r="18.6" fill="#f4f4f4"/>
<g clip-path="url(#c14)">
<rect x="30" y="56" width="44" height="44" fill="#d4d5d6"/>
<path d="M36 74 L46 68 L50 72 L56 76 L66 78 L72 90 L70 100 H40 L42 88 L36 80 Z" fill="#151414"/>
<path d="M52 66 Q56 62 62 64 Q66 68 64 76 L60 80 L54 76 Z" fill="#5a2a1e"/>
<ellipse cx="57.6" cy="70" rx="3.2" ry="3.8" fill="#d6a58c" transform="rotate(20 57.6 70)"/>
<path d="M46 68 L50 63 L53 65 L50 70 Z M63 68 L65 72 L63 76 L61.4 72 Z" fill="#d6a58c"/>
<rect x="55" y="68" width="6" height="1.8" fill="#2a1a14" transform="rotate(20 58 69)"/>
</g>
<text x="20.6" y="107.2" font-family="Liberation Sans, sans-serif" font-weight="700" font-size="9.4" fill="#fff" textLength="65" lengthAdjust="spacingAndGlyphs">VOTE FOR ME!</text>
<rect x="86.4" y="6.1" width="13.3" height="13.3" rx="3.4" fill="#0b0b0c"/><rect x="88.55" y="8.25" width="9" height="9" rx="2.7" fill="none" stroke="#fff" stroke-width="1.5"/><circle cx="93.05" cy="12.75" r="2.1" fill="none" stroke="#fff" stroke-width="1.4"/><circle cx="95.75" cy="10.05" r="0.65" fill="#fff"/></svg></div>
<div class="ph" style="left:515px;top:399px;background:#d9d9d9"><svg width="106" height="106" viewBox="0 0 106 106"><defs><linearGradient id="g15" x1="0" y1="0" x2="0" y2="1"><stop offset="0" stop-color="#dcdddd"/><stop offset="1" stop-color="#cfd0d0"/></linearGradient></defs>
<rect width="106" height="106" fill="url(#g15)"/>
<path d="M58 -1 H74 V.6 H58 Z" fill="#e58a2c"/>
<!-- hair back -->
<path d="M50 26 Q56 14 70 15.6 Q84 18 90 32 Q94 44 90 56 Q84 50 78 52 L60 62 Q48 60 42 56 Q40 46 46 36 Z" fill="#6a2c1c"/>
<path d="M40 52 Q34 58 28 62 L44 66 Z" fill="#5a2416"/>
<!-- jacket -->
<path d="M0 36 Q8 32 18 27 L26 28 L28 36 Q14 44 8 52 Q18 60 26 64 L44 58 L60 64 L76 54 Q88 50 98 56 Q104 66 103 84 Q100 96 92 106 H0 Z" fill="#1a1817"/>
<path d="M30 70 Q50 60 70 66 Q60 80 40 92 Q24 100 10 106 H0 V96 Q18 84 30 70 Z" fill="#2b2826" opacity=".8"/>
<path d="M60 84 Q80 72 98 76 Q100 90 92 106 H50 Q56 94 60 84 Z" fill="#262321" opacity=".8"/>
<path d="M2 40 Q10 36 20 30" stroke="#3d3936" stroke-width="1.6" fill="none"/>
<!-- neck / chest -->
<path d="M40 56 Q50 52 58 58 L62 66 Q50 62 36 66 Q30 68 24 74 L30 62 Z" fill="#cf9b80"/>
<path d="M36 58 Q44 62 54 60" stroke="#f0e6d8" stroke-width="1.2" fill="none" stroke-dasharray="1 .8"/>
<!-- face -->
<path d="M50 32 Q52 22 62 22 Q74 24 76 34 Q78 44 70 50 Q60 56 52 50 Q46 42 50 32 Z" fill="#d8a489"/>
<path d="M48 30 Q56 18 70 19 Q80 22 84 32 Q76 26 68 26 Q58 26 52 32 Z" fill="#6a2c1c"/>
<!-- sunglasses -->
<path d="M52 25 Q58 24 62 28 Q62 33 57 33.6 Q51.6 32 52 25 Z M66 30 Q72 30 77 34 Q77 39.6 72 40.4 Q66 38.6 66 30 Z" fill="#4a2a1e"/>
<path d="M52 25 L77 34 M62 28.6 L66 30.6" stroke="#1c1412" stroke-width="1.1" fill="none"/>
<!-- mouth -->
<path d="M55 39.6 Q60 40 65 45 Q60 50 55 47 Q53.6 43 55 39.6 Z" fill="#7a2a26"/>
<path d="M56 40.4 Q60 41 63.6 44.4 Q60 44.4 56.6 42.6 Z" fill="#f6f2ee"/>
<!-- hands -->
<path d="M22 28 Q28 24 34 22 L40 17 L42 18.4 L38 23 L46 18 L47.6 20 L41 26 L47 24 L48 26 L40 32 Q34 36 27 35 Z" fill="#d8a489"/>
<path d="M78 36 Q80 30 82 32 L83 40 Q86 42 85.6 48 Q84 54 80 54 Q76 50 77 44 Z" fill="#d8a489"/>
<path d="M84 38 Q92 44 90 56 Q86 52 84 54 Z" fill="#5a2416"/>
<rect x="86.4" y="6.1" width="13.3" height="13.3" rx="3.4" fill="#0b0b0c"/><rect x="88.55" y="8.25" width="9" height="9" rx="2.7" fill="none" stroke="#fff" stroke-width="1.5"/><circle cx="93.05" cy="12.75" r="2.1" fill="none" stroke="#fff" stroke-width="1.4"/><circle cx="95.75" cy="10.05" r="0.65" fill="#fff"/></svg></div>
<div class="ph" style="left:626px;top:399px;background:#c9c9c9"><svg width="106" height="106" viewBox="0 0 106 106"><defs><linearGradient id="g16" x1="0" y1="0" x2="0" y2="1"><stop offset="0" stop-color="#d2d2d2"/><stop offset=".5" stop-color="#c4c5c6"/><stop offset="1" stop-color="#b4b6b8"/></linearGradient>
<linearGradient id="h16" x1="0" y1="0" x2="0" y2="1"><stop offset="0" stop-color="#2e1a1b"/><stop offset=".3" stop-color="#6e2239"/><stop offset=".7" stop-color="#8c2a48"/><stop offset="1" stop-color="#6a2038"/></linearGradient></defs>
<rect width="106" height="106" fill="url(#g16)"/>
<rect x="92" y="0" width="14" height="106" fill="#dcdcdc" opacity=".6"/>
<rect x="0" y="100" width="30" height="6" fill="#a88a5a"/>
<!-- hair -->
<path d="M44 14 Q50 0 68 1 Q84 2 88 18 Q90 34 86 50 Q90 62 88 76 L80 92 L66 72 L58 106 H36 Q34 92 37 76 Q35 60 39 44 Q40 26 44 14 Z" fill="url(#h16)"/>
<path d="M38 60 Q44 80 42 106 H35 Q34 80 37 66 Z" fill="#7c2642"/><path d="M46 50 Q50 80 46 106 M52 56 Q56 84 52 106" stroke="#6e2440" stroke-width="1.6" fill="none" opacity=".7"/>
<!-- shoulders -->
<path d="M22 74 Q30 66 38 68 L40 106 H20 Q22 88 22 74 Z" fill="#cc957a"/>
<path d="M80 66 Q94 68 100 80 L104 106 H82 Z" fill="#d09a80"/>
<!-- top -->
<path d="M54 72 Q66 78 82 68 Q90 80 92 106 H50 Q52 86 54 72 Z" fill="#131112"/>
<!-- neck, face -->
<path d="M60 50 L78 50 L80 70 Q68 80 58 72 Z" fill="#c98f76"/>
<path d="M56 18 Q58 6 68 6 Q80 8 81 22 Q82 38 76 48 Q70 56 64 54 Q56 48 55 36 Z" fill="#d0987c"/>
<path d="M62 40 Q68 44 75 40 Q72 48 67 48 Q63 47 62 40 Z" fill="#8a2f30"/>
<path d="M63 41 Q68 43.6 74 41 Q70 44 66 44 Z" fill="#f5efea"/>
<path d="M58 25 Q61 23.4 64 25 M70 25 Q73 23.4 77 25" stroke="#3a2420" stroke-width="1.2" fill="none"/>
<path d="M52 8 Q60 2 70 4 Q58 10 56 28 Q52 44 54 60 L46 70 Q40 40 52 8 Z" fill="url(#h16)"/>
<path d="M78 8 Q86 14 86 30 Q88 46 84 60 L80 50 Q84 30 78 8 Z" fill="#5a2230"/>
<!-- hand -->
<path d="M0 62 Q4 58 8 64 L12 72 L16 58 Q18 52 21 54 Q23 58 21 66 L22 76 Q26 88 22 106 H0 Z" fill="#d29c82"/>
<!-- text -->
<g font-family="Liberation Serif, serif" font-size="4.35" fill="#1c1c1c">
<text x="6.6" y="1.4">hosting an event in</text>
<text x="6.6" y="6">NYC for 300+ brands</text>
<text x="6.6" y="10.6">and today we have our</text>
<text x="6.6" y="15.2">virtual rehearsal!</text>
<text x="6.6" y="25">So I'm currently doing</text>
<text x="6.6" y="29.8">a solo rehearsal before</text>
<text x="6.6" y="34.6">the call to make sure</text>
<text x="6.6" y="39.4">my script is SOLID</text>
</g>
<rect x="86.4" y="6.1" width="13.3" height="13.3" rx="3.4" fill="#0b0b0c"/><rect x="88.55" y="8.25" width="9" height="9" rx="2.7" fill="none" stroke="#fff" stroke-width="1.5"/><circle cx="93.05" cy="12.75" r="2.1" fill="none" stroke="#fff" stroke-width="1.4"/><circle cx="95.75" cy="10.05" r="0.65" fill="#fff"/></svg></div>
<div class="ph" style="left:737px;top:399px;background:#2c2c2c"><svg width="106" height="106" viewBox="0 0 106 106"><defs><linearGradient id="g17" x1="0" y1="0" x2="0" y2="1"><stop offset="0" stop-color="#1f1f1f"/><stop offset=".35" stop-color="#2e2e2e"/><stop offset=".6" stop-color="#3f3f3f"/><stop offset="1" stop-color="#4a4a4a"/></linearGradient></defs>
<rect width="106" height="106" fill="url(#g17)"/>
<rect x="0" y="4" width="106" height="5" fill="#3c3c3c" opacity=".8"/>
<rect x="0" y="18" width="106" height="24" fill="#191919" opacity=".8"/>
<g fill="#3a3a3a"><rect x="46" y="18" width="4" height="26"/><rect x="70" y="20" width="3" height="22"/></g>
<rect x="0" y="9" width="4" height="2" fill="#cfcfcf"/>
<!-- woman -->
<path d="M6 0 H14 L18 26 L12 30 Z" fill="#8c8c8c"/>
<path d="M8 30 Q16 22 26 26 L40 30 Q46 40 46 60 L44 84 L38 88 L34 60 L30 46 L18 50 L14 60 L8 56 Q6 42 8 30 Z" fill="#7f7f7f"/>
<path d="M34.3 28 L42.3 31.6 L47.7 54.8 L45.9 81.5 L37.9 85 L36 54.8 Z" fill="#8a8a8a"/>
<path d="M22 8 Q24 0 32 1 Q40 3 40 14 Q42 22 40 30 L34 26 L24 28 L20 22 Q20 14 22 8 Z" fill="#1a1a1a"/>
<ellipse cx="30" cy="14" rx="5" ry="6.4" fill="#c9c9c9"/>
<rect x="24.6" y="10.4" width="10.4" height="3" rx="1.2" fill="#0c0c0c"/>
<path d="M27 17 Q30 19.6 33 17 Q30 21.6 27 17 Z" fill="#f2f2f2"/>
<path d="M24 8 Q30 3 37 8 L36 10 H25 Z" fill="#1a1a1a"/>
<path d="M20 30 L36 32 L36 52 Q26 56 16 52 Z" fill="#0e0e0e"/>
<path d="M24 22 L34 22 L36 32 L20 30 Z" fill="#bdbdbd"/>
<path d="M15 53 Q26 57 36 53 L36 56 Q26 60 15 56 Z" fill="#cdcdcd"/>
<path d="M14 56 Q26 60 37 56 L44 80 Q52 92 56 100 L46 106 H28 L26 80 L24 106 H12 Q12 80 14 56 Z" fill="#161616"/>
<path d="M38 84 L44 84 L42 92 L36 90 Z" fill="#d0d0d0"/>
<path d="M34 88 L26 106 H42 L42 92 Z" fill="#0a0a0a"/>
<!-- question sticker -->
<rect x="48.9" y="25.4" width="51" height="22.8" rx="2" fill="#f7f7f7"/>
<path d="M48.9 27.4 Q48.9 25.4 50.9 25.4 H97.9 Q99.9 25.4 99.9 27.4 V34.4 H48.9 Z" fill="#27303c"/>
<g font-family="Liberation Sans, sans-serif" text-anchor="middle">
<text x="74.4" y="29.6" font-size="2.3" font-weight="700" fill="#e8e8e8">ASK ME ANYTHING</text>
<text x="74.4" y="32.6" font-size="2.1" fill="#cfd3d8">or DM me <tspan fill="#f2c230" stroke="none">●</tspan></text>
<text x="74.4" y="40.2" font-size="2.7" fill="#222">I want to work with you!! I'm just not</text>
<text x="74.4" y="44" font-size="2.7" fill="#222">sure which one is better for me?</text>
</g>
<g font-family="Liberation Serif, serif" font-size="3.75" fill="#f2f2f2" text-anchor="middle">
<text x="75.5" y="55.2">I would love to</text>
<text x="75.5" y="59.4">support you!!! <tspan fill="#f2c230" stroke="none">●</tspan></text>
<text x="75.5" y="67.4">Send me a DM if you're</text>
<text x="75.5" y="71.4">not sure which one is</text>
<text x="75.5" y="75.4">better, happy to give</text>
<text x="75.5" y="79.4">you personal feedback</text>
<text x="75.5" y="83.4">based on where you're</text>
<text x="75.5" y="87.4">at / your goals! <tspan fill="#f2c230" stroke="none">●</tspan></text>
</g>
<rect x="86.4" y="6.1" width="13.3" height="13.3" rx="3.4" fill="#0b0b0c"/><rect x="88.55" y="8.25" width="9" height="9" rx="2.7" fill="none" stroke="#fff" stroke-width="1.5"/><circle cx="93.05" cy="12.75" r="2.1" fill="none" stroke="#fff" stroke-width="1.4"/><circle cx="95.75" cy="10.05" r="0.65" fill="#fff"/></svg></div>
<div class="ph" style="left:848px;top:399px;background:#4b4945"><svg width="106" height="106" viewBox="0 0 106 106"><defs><radialGradient id="g18" cx="40" cy="30" r="90" gradientUnits="userSpaceOnUse"><stop offset="0" stop-color="#55534f"/><stop offset=".5" stop-color="#45433f"/><stop offset="1" stop-color="#262421"/></radialGradient></defs>
<rect width="106" height="106" fill="url(#g18)"/>
<rect x="0" y="92" width="106" height="14" fill="#1a1816" opacity=".7" filter="url(#b2)"/>
<!-- laptop screen -->
<g filter="url(#b1)">
<path d="M11 65 L66 63 L67 100 L12 103 Z" fill="#a0a1a4"/>
<path d="M11 66 L66 64 L66 67 L11 69 Z" fill="#5f6166"/>
<path d="M14 71 L62 69 L63 97 L15 99 Z" fill="#acadb0"/>
<rect x="0" y="102" width="80" height="4" fill="#191715"/>
<!-- tumbler -->
<path d="M81 60 L94 60 L95 100 L82 100 Z" fill="#7d6a5c"/>
<path d="M80.4 58 H94.6 V62 H80.4 Z" fill="#2a2624"/>
<path d="M87 48 L88 58" stroke="#2a2624" stroke-width="1"/>
<path d="M84 64 L87 64 L88 98 L85 98 Z" fill="#8c7868"/>
</g>
<ellipse cx="91" cy="93" rx="6" ry="7" fill="#d8803a" filter="url(#b2)" opacity=".8"/>
<ellipse cx="91" cy="93" rx="2.4" ry="3" fill="#f6c088" filter="url(#b1)"/>
<path d="M84 96 H98 V106 H84 Z" fill="#b9a898" filter="url(#b1)" opacity=".85"/>
<g font-family="Liberation Serif, serif" font-size="3.95" fill="#fbfaf7" stroke="#fbfaf7" stroke-width=".12" text-anchor="middle">
<text x="52" y="8.6">YES! I'm reviewing one from Warby Parker</text>
<text x="52" y="13">right now actually haha</text>
<text x="52" y="22">I've reviewed millions of dollars in brand</text>
<text x="52" y="26.6">partnership contracts over the last few years,</text>
<text x="52" y="31.2">so I know a few things on what to look for, avoid,</text>
<text x="52" y="35.8">and get taken out and would be happy to share</text>
<text x="52" y="40.4">that insider knowledge with you! <tspan fill="#f2c230" stroke="none">●</tspan></text>
</g>
<g font-family="Liberation Serif, serif" font-size="2.9" fill="#d9d6d0" text-anchor="middle">
<text x="52" y="50">*My disclaimer is I'm not a lawyer or attorney</text>
<text x="52" y="53.6">though and it would not be legal advice</text>
</g>
<rect x="86.4" y="6.1" width="13.3" height="13.3" rx="3.4" fill="#0b0b0c"/><rect x="88.55" y="8.25" width="9" height="9" rx="2.7" fill="none" stroke="#fff" stroke-width="1.5"/><circle cx="93.05" cy="12.75" r="2.1" fill="none" stroke="#fff" stroke-width="1.4"/><circle cx="95.75" cy="10.05" r="0.65" fill="#fff"/></svg></div>
<div class="ph" style="left:959px;top:399px;background:#e9e9e7"><svg width="106" height="106" viewBox="0 0 106 106"><defs><linearGradient id="g19" x1="0" y1="0" x2=".4" y2="1"><stop offset="0" stop-color="#f3f3f1"/><stop offset=".55" stop-color="#e2e2e0"/><stop offset="1" stop-color="#c9c9c7"/></linearGradient></defs>
<rect width="106" height="106" fill="url(#g19)"/>
<text x="27.6" y="5" font-family="Liberation Serif, serif" font-weight="700" font-size="7" fill="#111" stroke="#111" stroke-width=".3" text-anchor="middle" textLength="19.6" lengthAdjust="spacingAndGlyphs">AUDIT</text>
<text x="55.6" y="8.6" font-family="Liberation Serif, serif" font-weight="700" font-size="7" fill="#111" stroke="#111" stroke-width=".3" textLength="27" lengthAdjust="spacingAndGlyphs">ACTION</text>
<rect x="14.6" y="10.9" width="92" height="1.4" fill="#333"/>
<rect x="52" y="0" width=".9" height="93" fill="#444"/>
<g font-family="Liberation Serif, serif" font-size="3.3" fill="#111" stroke="#111" stroke-width=".12">
<text x="15.6" y="18.6">✔ Send me your pitch,</text><text x="15.6" y="22">negotiation, or social</text><text x="15.6" y="25.4">strategy</text>
<text x="15.6" y="32.6">✔ I'll give you</text><text x="15.6" y="36">personalized feedback,</text><text x="15.6" y="39.4">notes, and a step by step</text><text x="15.6" y="42.8">action plan</text>
<text x="15.6" y="50.6">✔ 5-10 minute video</text><text x="15.6" y="54">walk through of your</text><text x="15.6" y="57.4">notes for more context</text>
<text x="15.6" y="64.6">✔ Delivered to your</text><text x="15.6" y="68">inbox in 5 business days.</text>
<text x="58" y="17">✔ We'll</text><text x="58" y="20.4">Audit</text>
<text x="58" y="28">✔ Weekly</text><text x="58" y="31.4">call with</text><text x="58" y="34.8">your</text><text x="58" y="38.2">strategy</text>
<text x="58" y="45">✔ Access</text><text x="58" y="48.4">to your</text><text x="58" y="51.8">templates</text>
<text x="58" y="59">✔ Pitch</text><text x="58" y="62.4">support</text><text x="58" y="65.8">you through</text>
<text x="58" y="73">✔ Review</text><text x="58" y="76.4">or your</text><text x="58" y="79.8">contracts</text>
</g>
<path d="M60 106 L62 101 L66 102 V106 Z" fill="#111"/>
</svg></div>
<svg style="left:71px;top:576px" width="106" height="108" viewBox="0 0 106 108"><defs><clipPath id="pc71"><rect x="0" y="0" width="106" height="106.3" rx="5"/></clipPath></defs><g transform="translate(0 0.5)"><g clip-path="url(#pc71)"><rect width="106" height="106.3" fill="#d9d3cc"/><rect width="106" height="106" fill="#e4dfda"/>
<rect x="0" y="0" width="19" height="70" fill="#2a2623"/>
<rect x="14.6" y="0" width="2.6" height="70" fill="#0f0e0d"/>
<rect x="80" y="0" width="26" height="70" fill="#1f1c1a"/>
<rect x="102" y="0" width="4" height="20" fill="#6a4a3a"/>
<!-- lips -->
<path d="M31 22 Q31 10 42 3 Q48 -1 52 2 Q58 -1 64 3 Q72 10 72.4 22 Q70 30 60 33 Q52 35 46 33 Q34 30 31 22 Z" fill="#c4201c"/>
<path d="M40 16 Q46 8 52 8 Q60 8 64 16 Q66 20 64 22 Q52 24 40 22 Q38 19 40 16 Z" fill="#141212"/>
<path d="M41.6 15 Q46 7.6 52 7.6 Q58.6 7.6 62.6 14.4 Q52 12 41.6 15 Z" fill="#f3f1ef"/>
<path d="M51.2 7.6 V12.6" stroke="#555" stroke-width=".5"/>
<path d="M33 24 Q44 30 56 29 Q64 28 70 24 Q66 31 58 33 Q48 35 42 32 Q36 29 33 24 Z" fill="#a81814"/>
<!-- PRIM -->
<text x="19" y="57" font-family="Liberation Serif, serif" font-weight="700" font-size="25" fill="#0d0d0d" stroke="#0d0d0d" stroke-width=".5" textLength="50.5" lengthAdjust="spacingAndGlyphs">PRIM</text>
<!-- lipstick -->
<path d="M56 22 Q60 20 66 24 L69 30 L62 34 Z" fill="#b8428a"/>
<path d="M61 31 L72 27 L80 38 L84 54 L72 56 L62 46 Z" fill="#b58a52"/>
<path d="M60 36 L64 34 L74 56 L68 56 Z" fill="#caa56e"/>
<!-- man -->
<path d="M0 8 Q8 4 14 10 Q18 16 18 22 L14 18 L2 16 L0 18 Z" fill="#6b4a30"/>
<path d="M0 14 Q6 12 12 15 Q19 20 19.6 30 Q20 40 14 44 Q8 48 0 46 Z" fill="#d9a586"/>
<path d="M6 34 Q11 35 16 32 Q14 37 9 37.6 Q7 37 6 34 Z" fill="#f6f1ec"/>
<path d="M3 23 Q6 21.6 9 23 M13 23 Q15.6 21.6 18 23.4" stroke="#4a3424" stroke-width="1" fill="none"/>
<path d="M0 44 Q8 50 16 44 L20 48 L10 52 L0 50 Z" fill="#c99474"/>
<path d="M0 47 Q6 50 10 52 L20 42 Q32 46 40 52 Q46 58 47 70 H0 Z" fill="#6c2a38"/>
<path d="M10 52 L20 42 L22 46 L14 54 Z" fill="#571f2c"/>
<!-- woman -->
<path d="M84 20 Q88 8 98 8 Q104 8 106 12 V64 H78 Q82 52 82 44 Q80 30 84 20 Z" fill="#d8bb8c"/>
<path d="M86 24 Q90 14 98 15 Q104 16 106 20 V46 Q100 52 94 50 Q88 46 86 38 Z" fill="#dba684"/>
<path d="M91 40 Q97 42 103 39 Q100 44 96 44 Q92 43.6 91 40 Z" fill="#f6f1ec"/>
<path d="M89 28 Q92 26.6 95 28 M99.6 28 Q102.6 26.6 105 28.4" stroke="#4a3424" stroke-width="1" fill="none"/>
<path d="M80 50 Q86 54 90 62 L84 70 H76 Z" fill="#cfae7c"/>
<path d="M92 50 Q98 54 104 50 L106 64 H94 Z" fill="#cf9a7a"/>
<!-- equipment -->
<path d="M0 60 Q14 57 30 62 L34 70 H0 Z" fill="#1c1a19"/>
<path d="M44 60 Q60 56 80 58 Q96 60 106 62 V70 H44 Z" fill="#171514"/>
<rect x="6" y="62.6" width="6" height="1.4" fill="#9a3a30"/>
<rect x="86.4" y="6.1" width="13.3" height="13.3" rx="3.4" fill="#0b0b0c"/><rect x="88.1" y="8.9" width="10" height="7.8" rx="2.3" fill="#fff"/><path d="M91.9 11.1 L95.1 12.8 L91.9 14.5 Z" fill="#0b0b0c"/></g></g></svg>
<svg style="left:182px;top:576px" width="106" height="108" viewBox="0 0 106 108"><defs><clipPath id="pc182"><rect x="0" y="0" width="106" height="106.3" rx="5"/></clipPath></defs><g transform="translate(0 0.5)"><g clip-path="url(#pc182)"><rect width="106" height="106.3" fill="#cfc5b8"/><defs><linearGradient id="g22" x1="0" y1="0" x2="1" y2="0"><stop offset="0" stop-color="#cbbfb0"/><stop offset=".25" stop-color="#d6ccbf"/><stop offset=".7" stop-color="#d0c6b8"/><stop offset="1" stop-color="#c4b7a6"/></linearGradient></defs>
<rect width="106" height="106" fill="url(#g22)"/>
<rect x="20" y="0" width="14" height="50" fill="#e4ddd3"/>
<rect x="31" y="0" width="2" height="50" fill="#5a5048"/>
<path d="M72 0 H80 V70 H74 Z" fill="#bdb1a1"/>
<path d="M80 0 H86 V70 H80 Z" fill="#e1d9cd"/>
<path d="M96 0 H106 V70 H98 Z" fill="#cdbfae"/>
<!-- frame -->
<path d="M12 0 H18.6 L20.6 20 L15 24 Z" fill="#2c2a29"/>
<path d="M14 0 H17.4 L19 19 L16 21.4 Z" fill="#b9b6b2"/>
<!-- floor -->
<path d="M30 38 L36 38 L40 70 H10 Z" fill="#b9aea4"/>
<path d="M27 40 L10 70 H14 L29.6 42 Z" fill="#f1ede8"/>
<path d="M68 56 L74 70 H70 L66 60 Z" fill="#efeae4"/>
<!-- person -->
<path d="M44 0 H66 Q66 8 62 12 H48 Q44 8 44 0 Z" fill="#8a6a4c"/>
<path d="M50 0 H60 L59 7 H51 Z" fill="#cf9f82"/>
<path d="M37 10 Q42 4 48 6 L56 12 L66 8 Q72 10 74 18 Q74 34 70 44 L68 62 Q56 66 44 64 L36 60 Q30 50 32 38 Q33 20 37 10 Z" fill="#131212"/>
<path d="M48 28 Q60 24 70 18 Q74 30 70 42 Q62 46 56 44 Z" fill="#2c2a29"/>
<path d="M34 30 Q38 40 36 56 L40 62" stroke="#3a3836" stroke-width="1.2" fill="none"/>
<path d="M44 36 Q52 40 50 56 L46 62 L42 50 Z" fill="#232221"/>
<!-- phone + hand -->
<rect x="38" y="4.6" width="8.4" height="13" rx="1.6" fill="#d9b4a4"/>
<circle cx="43.6" cy="7.2" r="1" fill="#2a2624"/><circle cx="41.4" cy="8.6" r="1" fill="#2a2624"/><circle cx="43.6" cy="9.8" r="1" fill="#2a2624"/>
<path d="M37 17 Q42 14 48 17 Q52 20 51 24 Q46 27 40 25 Q36 22 37 17 Z" fill="#d7a585"/>
<path d="M40 58 Q44 60 46 63 L42 64 Z" fill="#cf9f82"/>
<path d="M38 64 H68 V70 H38 Z" fill="#0d0d0d"/>
<rect x="86.4" y="6.1" width="13.3" height="13.3" rx="3.4" fill="#0b0b0c"/><rect x="88.55" y="8.25" width="9" height="9" rx="2.7" fill="none" stroke="#fff" stroke-width="1.5"/><circle cx="93.05" cy="12.75" r="2.1" fill="none" stroke="#fff" stroke-width="1.4"/><circle cx="95.75" cy="10.05" r="0.65" fill="#fff"/></g></g></svg>
<svg style="left:293px;top:576px" width="106" height="108" viewBox="0 0 106 108"><defs><clipPath id="pc293"><rect x="0" y="0" width="106" height="106.3" rx="5"/></clipPath></defs><g transform="translate(0 0.5)"><g clip-path="url(#pc293)"><rect width="106" height="106.3" fill="#5a3a26"/><defs><linearGradient id="g23" x1="0" y1="0" x2="0" y2="1"><stop offset="0" stop-color="#7a3a16"/><stop offset=".06" stop-color="#633319"/><stop offset="1" stop-color="#5e3620"/></linearGradient></defs>
<rect width="106" height="106" fill="url(#g23)"/>
<rect x="0" y="0" width="23" height="70" fill="#21150f"/>
<path d="M4 36 Q14 30 23 34 V70 H6 Q2 50 4 36 Z" fill="#3e3530"/>
<path d="M0 44 Q8 50 8 70 H0 Z" fill="#100c0a"/>
<ellipse cx="22" cy="22" rx="6" ry="9" fill="#3a2a22" opacity=".8"/>
<rect x="83" y="0" width="23" height="70" fill="#33261e"/>
<path d="M86 30 Q96 24 104 34 L106 70 H84 Z" fill="#4a3c34" opacity=".8"/>
<!-- woman -->
<path d="M46 22 Q52 12 62 15 Q72 18 75 30 Q78 44 74 56 L72 70 H44 Q40 56 44 46 Q42 32 46 22 Z" fill="#cfae80"/>
<path d="M46 26 Q50 17 58 18 Q62 24 62 34 Q62 42 58 46 Q52 48 48 44 Q44 36 46 26 Z" fill="#d7a284"/>
<path d="M49 36 Q52 37.6 55 36.6 Q53 39.4 50.6 39 Z" fill="#a8584a"/>
<path d="M47 28 Q50 26.6 53 28 M56 29 Q58 28 60 29.4" stroke="#5a4030" stroke-width="1" fill="none"/>
<path d="M58 16 Q70 18 74 32 Q76 48 72 62 L64 56 Q66 40 62 28 Z" fill="#e3c79a"/>
<path d="M60 42 Q66 38 70 42 L74 48 Q80 52 80 60 L74 62 L66 54 L58 50 Z" fill="#d9a688"/>
<path d="M42 46 Q46 52 52 52 L60 56 L56 64 H40 Z" fill="#dcc094"/>
<!-- zebra top -->
<path d="M36 52 Q44 48 52 54 Q60 58 70 56 L82 58 V70 H24 L28 58 Z" fill="#ece6dc"/>
<g stroke="#161412" stroke-width="2" fill="none"><path d="M28 60 Q36 56 44 60 M34 65 Q44 61 54 65 M60 60 Q68 62 76 60 M64 66 Q72 68 80 66 M26 68 Q32 66 38 69"/></g>
<!-- mic -->
<path d="M26 50 Q32 46 36 50 L34 60 L24 64 Q22 56 26 50 Z" fill="#2c2826"/>
<path d="M24 62 L34 70 H22 Z" fill="#1a1716"/>
<!-- logo -->
<g fill="#f4f2f0"><rect x="59" y="11" width="6" height="5" rx="1"/><rect x="66" y="13.6" width="12" height="3.4" rx=".6"/></g>
<circle cx="66" cy="12.4" r="1.6" fill="#f4f2f0"/>
<path d="M74 40 L78 36 L80 42 Z" fill="#4a6a34"/>
<rect x="86.4" y="6.1" width="13.3" height="13.3" rx="3.4" fill="#0b0b0c"/><rect x="88.1" y="8.9" width="10" height="7.8" rx="2.3" fill="#fff"/><path d="M91.9 11.1 L95.1 12.8 L91.9 14.5 Z" fill="#0b0b0c"/></g></g></svg>
<svg style="left:404px;top:576px" width="106" height="108" viewBox="0 0 106 108"><defs><clipPath id="pc404"><rect x="0" y="0" width="106" height="106.3" rx="5"/></clipPath></defs><g transform="translate(0 0.5)"><g clip-path="url(#pc404)"><rect width="106" height="106.3" fill="#b9cbdc"/><defs><linearGradient id="g24" x1="0" y1="0" x2="1" y2="1"><stop offset="0" stop-color="#d6e4f1"/><stop offset=".5" stop-color="#c0d0e2"/><stop offset="1" stop-color="#e4ebf2"/></linearGradient></defs>
<rect width="106" height="106" fill="url(#g24)"/>
<g filter="url(#b2)"><ellipse cx="46" cy="14" rx="18" ry="7" fill="#aebfd4"/><ellipse cx="92" cy="26" rx="16" ry="6" fill="#bccbdc"/><ellipse cx="14" cy="6" rx="16" ry="5" fill="#e3edf5"/><ellipse cx="84" cy="40" rx="26" ry="8" fill="#dde6ef"/></g>
<path d="M0 24 L14 32 L14 38 L0 34 Z" fill="#2a3442"/>
<path d="M100 50 L106 48 V70 H98 Z" fill="#4a7ea8"/>
<!-- man -->
<path d="M42 36 Q50 30 60 34 L80 40 Q92 44 98 56 L100 70 H40 Z" fill="#f1f0ee"/>
<path d="M56 8 Q60 0 72 0 Q82 2 84 12 Q85 18 82 24 L58 22 Q55 14 56 8 Z" fill="#2e2a28"/>
<path d="M58 14 Q60 6 70 6 Q80 8 81 18 Q82 30 78 38 Q74 46 68 47 Q60 46 58 38 Q55 26 58 14 Z" fill="#cf9478"/>
<path d="M62 32 Q68 35 75 31 Q73 37 68 37.6 Q64 37 62 32 Z" fill="#f6f1ec"/>
<path d="M60 19 Q63.6 17.6 67 19.4 M72 19 Q75.6 17.4 79 19.4" stroke="#3a2a22" stroke-width="1.1" fill="none"/>
<path d="M60 40 Q68 50 78 40 L80 52 L66 56 L58 50 Z" fill="#c88d70"/>
<!-- boy -->
<path d="M13 20 Q14 10 26 9 Q38 10 40 22 Q42 30 38 34 L14 30 Q12 26 13 20 Z" fill="#6e5640"/>
<path d="M16 26 Q20 18 30 20 Q38 24 37 32 Q36 42 28 46 Q20 46 17 38 Q14 32 16 26 Z" fill="#d39a7e"/>
<path d="M21 36 Q26 39 31 36 Q29 40.6 25.6 40.6 Q22.6 40 21 36 Z" fill="#f6f1ec"/>
<path d="M14 24 Q22 14 34 18 Q40 22 38 30 Q32 22 24 23 Q18 24 16 30 Z" fill="#6e5640"/>
<path d="M0 34 Q4 32 8 36 L12 44 L8 58 L2 60 L0 56 Z" fill="#cf9478"/>
<path d="M0 50 Q10 40 18 44 L24 48 L26 70 H0 Z" fill="#efefef"/>
<g stroke="#2a2a2e" stroke-width="1.3"><path d="M4 50 L2 70 M9 46 L8 70 M14 45 L14 70 M19 47 L20 70"/></g>
<path d="M16 42 Q22 50 30 46 L28 56 L18 54 Z" fill="#c98d72"/>
<!-- blonde woman -->
<path d="M22 48 Q30 34 44 35 Q54 36 58 46 Q60 56 58 70 H14 Q16 56 22 48 Z" fill="#e6d9c0"/>
<path d="M32 46 Q38 38 46 40 Q54 44 54 56 L52 70 H32 Q28 56 32 46 Z" fill="#d8a084"/>
<path d="M35 53 Q38.6 51.4 42 53 M46 54 Q49 52.6 52 54" stroke="#5a4030" stroke-width="1" fill="none"/>
<path d="M28 44 Q36 36 44 38 Q36 44 32 56 L30 70 H20 Q22 52 28 44 Z" fill="#efe4cc"/>
<!-- kids -->
<path d="M56 56 Q62 50 70 54 Q76 58 76 70 H54 Z" fill="#c9a880"/>
<path d="M58 62 Q64 58 70 62 L72 70 H58 Z" fill="#d8a68a"/>
<path d="M74 56 Q82 48 94 52 Q102 58 102 70 H72 Z" fill="#8a6a4a"/>
<path d="M78 62 Q86 58 94 62 L96 70 H78 Z" fill="#d39c80"/>
<rect x="86.4" y="6.1" width="13.3" height="13.3" rx="3.4" fill="#0b0b0c"/><rect x="88.55" y="8.25" width="9" height="9" rx="2.7" fill="none" stroke="#fff" stroke-width="1.5"/><circle cx="93.05" cy="12.75" r="2.1" fill="none" stroke="#fff" stroke-width="1.4"/><circle cx="95.75" cy="10.05" r="0.65" fill="#fff"/></g></g></svg>
<svg style="left:515px;top:576px" width="106" height="108" viewBox="0 0 106 108"><defs><clipPath id="pc515"><rect x="0" y="0" width="106" height="106.3" rx="5"/></clipPath></defs><g transform="translate(0 0.5)"><g clip-path="url(#pc515)"><rect width="106" height="106.3" fill="#8a5a30"/><defs><linearGradient id="g25" x1="0" y1="0" x2="0" y2="1"><stop offset="0" stop-color="#6a4020"/><stop offset=".12" stop-color="#7c5029"/><stop offset="1" stop-color="#8a5a30"/></linearGradient>
<radialGradient id="l25" cx="52" cy="9" r="34" gradientUnits="userSpaceOnUse" gradientTransform="translate(0 6) scale(1 .4)"><stop offset="0" stop-color="#ffe6a8"/><stop offset=".35" stop-color="#f0b860" stop-opacity=".9"/><stop offset="1" stop-color="#c07a34" stop-opacity="0"/></radialGradient></defs>
<rect width="106" height="106" fill="url(#g25)"/>
<rect x="23" y="0" width="60" height="9" fill="#6e4220"/>
<rect x="53" y="0" width="30" height="8" fill="#80542c"/>
<rect x="23" y="0" width="60" height="40" fill="url(#l25)"/>
<rect x="0" y="0" width="23" height="70" fill="#3a2a1f"/>
<path d="M6 0 Q16 20 14 70 H4 Q8 30 2 0 Z" fill="#4a382b"/>
<rect x="82" y="0" width="24" height="70" fill="#2c1e14"/>
<path d="M86 0 H96 Q98 30 94 70 H88 Q90 30 86 0 Z" fill="#3c2c20"/>
<path d="M92 40 Q100 36 106 40 V70 H90 Z" fill="#1c1410"/>
<!-- woman -->
<path d="M40 24 Q46 14 54 15 Q62 15 65 26 Q68 40 66 54 L68 70 H36 Q38 56 40 46 Q38 34 40 24 Z" fill="#c4a372"/>
<path d="M43 28 Q45 18 53 18 Q61 19 62 30 Q63 42 59 48 Q55 52 51 52 Q45 50 43 42 Z" fill="#cf9878"/>
<path d="M48 40 Q52 42 56 40 Q54 44 51.6 44 Q49 43.6 48 40 Z" fill="#7a3a30"/>
<path d="M45 30 Q48 28.6 51 30 M55 30 Q58 28.6 61 30.4" stroke="#5a4030" stroke-width="1" fill="none"/>
<path d="M40 26 Q44 16 52 16 Q46 22 45 34 Q44 50 46 70 H36 Q38 44 40 26 Z" fill="#cdb080"/>
<path d="M62 24 Q66 34 65 48 L68 70 H60 Q62 50 62 24 Z" fill="#b8986a"/>
<path d="M48 50 H58 L60 70 H46 Z" fill="#cf9a7c"/>
<path d="M24 60 Q34 52 44 54 L50 70 H23 Z" fill="#23201f"/>
<path d="M58 56 Q70 52 80 60 L82 70 H56 Z" fill="#23201f"/>
<!-- mic -->
<path d="M58 50 Q64 46 68 52 L66 62 L58 60 Z" fill="#4a4542"/>
<path d="M60 62 Q68 58 76 62 L78 70 H60 Z" fill="#f1eeea"/>
<path d="M66 64 Q69 62 71 65 L70 70 H66 Z" fill="#c8322a"/>
<path d="M66 60 L84 54" stroke="#161312" stroke-width="1.8"/>
<!-- logo -->
<g fill="#f4f2f0"><rect x="59" y="11" width="6" height="5" rx="1" opacity=".9"/><rect x="65" y="13.6" width="13" height="3.4" rx=".6"/></g>
<rect x="86.4" y="6.1" width="13.3" height="13.3" rx="3.4" fill="#0b0b0c"/><rect x="88.1" y="8.9" width="10" height="7.8" rx="2.3" fill="#fff"/><path d="M91.9 11.1 L95.1 12.8 L91.9 14.5 Z" fill="#0b0b0c"/></g></g></svg>
<svg style="left:626px;top:576px" width="106" height="108" viewBox="0 0 106 108"><defs><clipPath id="pc626"><rect x="0" y="0" width="106" height="106.3" rx="5"/></clipPath></defs><g transform="translate(0 0.5)"><g clip-path="url(#pc626)"><rect width="106" height="106.3" fill="#8a5a30"/><defs><linearGradient id="g26" x1="0" y1="0" x2="0" y2="1"><stop offset="0" stop-color="#6a4020"/><stop offset=".12" stop-color="#7c5029"/><stop offset="1" stop-color="#8a5a30"/></linearGradient>
<radialGradient id="l26" cx="52" cy="6" r="34" gradientUnits="userSpaceOnUse" gradientTransform="translate(0 3.6) scale(1 .4)"><stop offset="0" stop-color="#ffe6a8"/><stop offset=".35" stop-color="#f0b860" stop-opacity=".9"/><stop offset="1" stop-color="#c07a34" stop-opacity="0"/></radialGradient></defs>
<rect width="106" height="106" fill="url(#g26)"/>
<rect x="23" y="0" width="60" height="5" fill="#6e4220"/>
<rect x="53" y="0" width="30" height="4.6" fill="#80542c"/>
<rect x="23" y="0" width="60" height="36" fill="url(#l26)"/>
<rect x="0" y="0" width="23" height="70" fill="#33241a"/>
<path d="M6 0 Q20 16 18 70 H2 V0 Z" fill="#2a1e16"/>
<rect x="82" y="0" width="24" height="70" fill="#2c1e14"/>
<path d="M84 36 Q96 30 106 36 V70 H84 Z" fill="#15100d"/>
<!-- woman -->
<path d="M38 26 Q42 14 52 14 Q62 14 65 26 Q67 40 65 54 L66 70 H36 Q36 56 38 46 Q36 36 38 26 Z" fill="#c4a372"/>
<path d="M41 30 Q43 19 52 19 Q60 20 61 32 Q62 42 58 48 Q54 52 50 52 Q44 50 42 42 Z" fill="#cf9878"/>
<path d="M47 42 Q51 44 55 42 Q53 46 50.6 46 Q48 45.6 47 42 Z" fill="#7a3a30"/>
<path d="M44 33 Q47 34 50 33 M54 33 Q57 34 60 33" stroke="#5a4030" stroke-width="1" fill="none"/>
<path d="M38 28 Q42 16 51 15 Q45 22 44 34 Q43 50 46 70 H36 Q36 46 38 28 Z" fill="#cdb080"/>
<path d="M61 24 Q65 34 64 48 L66 70 H59 Q61 50 61 24 Z" fill="#b8986a"/>
<path d="M47 50 H57 L58 70 H46 Z" fill="#cf9a7c"/>
<path d="M30 58 Q38 52 44 54 L48 70 H30 Z" fill="#23201f"/>
<path d="M56 56 Q68 50 78 58 L80 70 H56 Z" fill="#1c1a19"/>
<!-- hand + pencil -->
<path d="M23 46 Q27 42 31 45 L34 54 L33 70 H23 Z" fill="#cf9878"/>
<path d="M27 46 L35 37" stroke="#5a2e22" stroke-width="1.4"/>
<!-- mic -->
<path d="M60 50 Q68 46 74 52 L78 58 L68 64 L60 58 Z" fill="#1e1b1a"/>
<path d="M66 62 Q74 58 80 62 L82 70 H66 Z" fill="#f1eeea"/>
<path d="M71 64 Q74 62 76 65 L75 70 H71 Z" fill="#c8322a"/>
<!-- logo -->
<g fill="#f4f2f0"><rect x="59" y="11" width="6" height="5" rx="1" opacity=".9"/><rect x="65" y="13.6" width="13" height="3.4" rx=".6"/></g>
<rect x="86.4" y="6.1" width="13.3" height="13.3" rx="3.4" fill="#0b0b0c"/><rect x="88.1" y="8.9" width="10" height="7.8" rx="2.3" fill="#fff"/><path d="M91.9 11.1 L95.1 12.8 L91.9 14.5 Z" fill="#0b0b0c"/></g></g></svg>
<svg style="left:737px;top:576px" width="106" height="108" viewBox="0 0 106 108"><defs><clipPath id="pc737"><rect x="0" y="0" width="106" height="106.3" rx="5"/></clipPath></defs><g transform="translate(0 0.5)"><g clip-path="url(#pc737)"><rect width="106" height="106.3" fill="#7a5230"/><defs><linearGradient id="g27" x1="0" y1="0" x2="1" y2="1"><stop offset="0" stop-color="#7c5029"/><stop offset=".5" stop-color="#6e4826"/><stop offset="1" stop-color="#5f3e20"/></linearGradient></defs>
<rect width="106" height="106" fill="url(#g27)"/>
<rect x="0" y="0" width="106" height="2" fill="#a8622c"/>
<g stroke="#6a4626" stroke-width=".6" opacity=".6"><path d="M0 12 H106 M0 24 H106 M0 36 H106 M0 48 H106"/></g>
<!-- left woman -->
<path d="M0 12 Q6 10 10 16 L6 30 L0 34 Z" fill="#c9a87a"/>
<path d="M0 18 Q8 16 13 24 Q16 32 16 38 L13 44 Q10 50 4 50 L0 48 Z" fill="#d7a283"/>
<path d="M7 41 Q10 42 13 40.6" stroke="#f1ece6" stroke-width="1" fill="none"/>
<path d="M5 30 Q8 28.6 11 30" stroke="#4a3424" stroke-width="1" fill="none"/>
<path d="M0 48 Q8 52 12 48 L14 64 H0 Z" fill="#c39270"/>
<path d="M0 56 Q6 58 8 70 H0 Z" fill="#9c7a54"/>
<!-- right woman -->
<path d="M90 20 Q96 12 106 14 V50 L98 48 Q92 36 90 20 Z" fill="#dcc092"/>
<path d="M88 26 Q92 18 100 20 Q106 22 106 28 V48 Q100 52 94 48 Q90 44 89 38 Z" fill="#d9a687"/>
<path d="M92 30 Q95 29 98 30.6" stroke="#5a4030" stroke-width="1" fill="none"/>
<path d="M90 40 Q93 41 95 40" stroke="#9a5a4a" stroke-width=".9" fill="none"/>
<path d="M82 48 Q90 44 96 50 L100 58 H80 Z" fill="#d9b08c"/>
<path d="M72 52 Q84 48 96 52 L104 64 L106 70 H66 Z" fill="#efeae2"/>
<g stroke="#141210" stroke-width="2.1" fill="none"><path d="M74 54 Q82 56 88 62 M70 60 Q80 62 88 68 M82 52 Q90 54 96 60 M68 66 Q74 67 80 70"/></g>
<!-- mic arm -->
<path d="M17 38 L40 48 L52 56 L58 64" stroke="#171514" stroke-width="2.2" fill="none" stroke-linecap="round"/>
<path d="M40 47 L52 54" stroke="#5a5653" stroke-width="2.6" stroke-linecap="round"/>
<path d="M58 52 Q64 48 70 52 L68 62 L62 66 L56 62 Z" fill="#3a3532"/>
<path d="M12 52 Q18 48 24 52 L34 58 L40 62 L38 70 H14 Z" fill="#2c2a2a"/>
<path d="M14 52 Q18 50 20 54 L20 70 H14 Z" fill="#4a4a4e"/>
<path d="M46 62 Q54 58 60 64 L60 70 H46 Z" fill="#f1eeea"/>
<rect x="86.4" y="6.1" width="13.3" height="13.3" rx="3.4" fill="#0b0b0c"/><rect x="88.1" y="8.9" width="10" height="7.8" rx="2.3" fill="#fff"/><path d="M91.9 11.1 L95.1 12.8 L91.9 14.5 Z" fill="#0b0b0c"/></g></g></svg>
<svg style="left:848px;top:576px" width="106" height="108" viewBox="0 0 106 108"><defs><clipPath id="pc848"><rect x="0" y="0" width="106" height="106.3" rx="5"/></clipPath></defs><g transform="translate(0 0.5)"><g clip-path="url(#pc848)"><rect width="106" height="106.3" fill="#b9d6c0"/><rect width="106" height="106" fill="#b7d8c0"/>
<path d="M76 0 H106 V70 H92 L82 56 Z" fill="#efefec"/>
<path d="M80 54 L96 70 H78 Z" fill="#a8cdb2"/>
<!-- big letters -->
<g font-family="Liberation Sans, sans-serif" font-weight="700" fill="#0e0e0e" font-size="13.4">
<text x="84" y="7.6" textLength="26" lengthAdjust="spacingAndGlyphs">NEW</text>
<text x="78" y="20" textLength="30" lengthAdjust="spacingAndGlyphs">YORK</text>
<text x="81" y="33" textLength="20" lengthAdjust="spacingAndGlyphs">LM</text>
<text x="82" y="45.6" textLength="26" lengthAdjust="spacingAndGlyphs">FES</text>
<text x="88" y="57.6" textLength="20" lengthAdjust="spacingAndGlyphs">IVA</text>
<text x="96" y="70" >S</text>
</g>
<!-- left logos -->
<circle cx="6.4" cy="5.6" r="4.6" fill="none" stroke="#3a4a40" stroke-width="1.1"/>
<g fill="#3a4a40"><circle cx="6.4" cy="3" r="1"/><circle cx="4" cy="5" r="1"/><circle cx="8.8" cy="5" r="1"/><circle cx="5" cy="7.8" r="1"/><circle cx="7.8" cy="7.8" r="1"/></g>
<g font-family="Liberation Sans, sans-serif" fill="#3a4a40" font-size="2.6"><text x="13.4" y="4">Film at</text><text x="13.4" y="6.8">Lincoln</text><text x="13.4" y="9.6">Center</text></g>
<g font-family="Liberation Sans, sans-serif" font-weight="700" fill="#1c1c1c" font-size="2.7"><text x="0" y="28.4" textLength="25">SPRINGS TA</text><text x="0" y="31.8" textLength="25">RELIEF BY THE</text><text x="44" y="8" font-size="4">FE</text></g>
<text x="10" y="53" font-family="Liberation Serif, serif" font-weight="700" fill="#1c2a22" font-size="3.6" textLength="15">ROLEX</text>
<path d="M16 46 L17 48.6 H19.6 L20.6 46 L19.4 47 L18.3 45.4 L17.2 47 Z" fill="#1c2a22"/>
<!-- woman -->
<path d="M28 4 Q30 -2 38 -2 Q46 0 46 10 Q48 16 44 20 L40 14 L34 18 Q30 26 30 36 L26 34 Q24 24 26 14 Z" fill="#e4cf9f"/>
<path d="M36 0 H44 Q46 6 44 10 Q40 12 36 8 Z" fill="#d9a787"/>
<path d="M32 20 Q36 14 42 18 L46 26 Q50 40 50 54 L52 70 H32 Q30 60 34 48 Q30 34 32 20 Z" fill="#0d0d0e"/>
<path d="M32 20 Q36 16 40 20 Q42 30 42 40 L46 56 L52 70 H46 L38 50 Q34 38 32 20 Z" fill="#dba883"/>
<path d="M31 22 Q30 32 34 46 L32 30 Z" fill="#d7a280"/>
<path d="M31 58 Q36 56 38 62 L36 68 L32 66 Z" fill="#d7a280"/>
<!-- man -->
<path d="M52 0 H64 V6 Q58 9 52 5 Z" fill="#cf9a7a"/>
<path d="M44 12 Q50 6 56 6 H64 Q72 8 76 16 L80 34 L84 54 L82 62 L78 60 L80 70 H46 L48 50 Q44 30 44 12 Z" fill="#111113"/>
<path d="M52 6 Q58 10 64 6 L62 24 L60 36 L56 24 Z" fill="#f4f2f0"/>
<path d="M52 6 L60 36 L56 40 L48 14 Z M64 6 L60 36 L64 40 L68 12 Z" fill="#1c1c1f"/>
<path d="M78 60 Q82 58 83 62 L82 70 H78 Z" fill="#cf9a7a"/>
<rect x="86.4" y="6.1" width="13.3" height="13.3" rx="3.4" fill="#0b0b0c"/><rect x="88.55" y="8.25" width="9" height="9" rx="2.7" fill="none" stroke="#fff" stroke-width="1.5"/><circle cx="93.05" cy="12.75" r="2.1" fill="none" stroke="#fff" stroke-width="1.4"/><circle cx="95.75" cy="10.05" r="0.65" fill="#fff"/></g></g></svg>
<svg style="left:959px;top:576px" width="106" height="108" viewBox="0 0 106 108"><defs><clipPath id="pc959"><rect x="0" y="0" width="106" height="106.3" rx="5"/></clipPath></defs><g transform="translate(0 0.5)"><g clip-path="url(#pc959)"><rect width="106" height="106.3" fill="#e6dccf"/><defs><linearGradient id="g29" x1="0" y1="0" x2="1" y2="0"><stop offset="0" stop-color="#dfe0e4"/><stop offset=".55" stop-color="#e9e4dc"/><stop offset="1" stop-color="#ece4d8"/></linearGradient></defs>
<rect width="106" height="106" fill="url(#g29)"/>
<rect x="44" y="0" width="62" height="70" fill="#eee6da"/>
<rect x="0" y="0" width="45" height="4.4" fill="#c79a5e"/>
<rect x="0" y="3.6" width="45" height="1" fill="#8a6a3e"/>
<rect x="0" y="18.6" width="44" height="2.2" fill="#c79a5e"/>
<rect x="0" y="35.6" width="45" height="2.4" fill="#cfa468"/>
<rect x="0" y="5" width="6.4" height="13.4" fill="#34302e"/>
<rect x="8" y="6" width="2.4" height="12.6" fill="#6a5a4a"/>
<path d="M14 16 Q20 13 27 16 V18.6 H14 Z" fill="#d9c9b0"/>
<rect x="4" y="28" width="2" height="7" fill="#d99a80"/><rect x="1.6" y="31" width="2" height="4.6" fill="#c9b090"/>
<rect x="8" y="31" width="6" height="4.6" fill="#efe9e0"/>
<path d="M60 4 L68 0 V18 H60 Z" fill="#e2d8ca"/>
<path d="M60 10 Q62 2 66 0" stroke="#c49058" stroke-width="1" fill="none"/>
<!-- plant -->
<g fill="#3e6a38"><ellipse cx="42" cy="12" rx="3.4" ry="4"/><ellipse cx="45" cy="18" rx="3" ry="3.6"/><ellipse cx="40" cy="20" rx="3" ry="3"/><ellipse cx="44" cy="25" rx="3.4" ry="3"/><ellipse cx="41" cy="30" rx="2.6" ry="2.6"/><ellipse cx="38" cy="15" rx="2" ry="2.4"/></g>
<path d="M38 33 H45 L44 37 H39 Z" fill="#f1efeb"/>
<g fill="#f4f2ee"><circle cx="35.6" cy="37.6" r="2.6"/><circle cx="39.4" cy="40.4" r="2.4"/><circle cx="33" cy="41.6" r="2.2"/><rect x="30" y="31.6" width="7" height="3.4" rx="1"/></g>
<!-- left woman -->
<path d="M12 26 Q16 20 24 21 Q30 23 31 30 Q32 40 30 48 L22 50 L12 46 Q10 36 12 26 Z" fill="#b89868"/>
<path d="M22 30 Q26 27 30 30 Q31 38 29 43 Q26 46 23 44 Q21 38 22 30 Z" fill="#d9a98c"/>
<path d="M12 28 Q18 22 25 24 Q22 30 22 38 Q22 46 18 50 L11 46 Q10 36 12 28 Z" fill="#c4a676"/>
<path d="M10 34 Q8 42 12 46" stroke="#a88c66" stroke-width="1.4" fill="none"/>
<path d="M2 50 Q10 40 18 44 L28 46 Q38 50 41 58 L42 70 H0 V56 Z" fill="#ecdfc9"/>
<path d="M14 44 Q20 50 28 45 L26 52 L18 52 Z" fill="#ddceb4"/>
<rect x="22" y="62" width="8" height="1.6" fill="#b85a6a" opacity=".8"/>
<!-- right woman -->
<path d="M50 32 Q54 26 62 27 Q66 28 66 34 V62 H52 Q48 54 49 44 Z" fill="#b08e60"/>
<path d="M53 36 Q56 30 62 32 Q66 34 66 40 V48 Q62 52 58 50 Q54 46 53 36 Z" fill="#d3a084"/>
<path d="M49 36 Q52 28 58 28 Q54 36 55 46 Q56 56 54 64 H48 Q46 48 49 36 Z" fill="#bc9c6c"/>
<path d="M42 56 Q48 48 54 52 L66 54 V70 H42 Z" fill="#ece0cc"/>
<path d="M55 46 Q57 56 56 66" stroke="#b89c70" stroke-width="1.2" fill="none"/>
</g></g></svg>
<svg style="left:71px;top:360.4px" width="33" height="33" viewBox="0 0 33 33">
<defs><clipPath id="cav1"><circle cx="16" cy="16" r="16"/></clipPath></defs>
<g clip-path="url(#cav1)">
<rect width="32" height="32" fill="#e6dad0"/>
<rect x="18" y="0" width="14" height="16" fill="#ece4dc"/>
<rect x="20" y="15.6" width="12" height="1.4" fill="#c8a078"/>
<path d="M11.6 5 Q12.6 1.4 15.6 1.6 Q19 2 19.4 6 Q22.4 12 21.6 18 L18 21 L12 19 Q9.6 16 11 11 Q11 8 11.6 5 Z" fill="#1c1514"/>
<ellipse cx="15.6" cy="6.8" rx="2.1" ry="2.7" fill="#d9a88c"/>
<path d="M5 16 Q8 12 12 13.6 L14 16 L12 22 L4 21 Z" fill="#d8a685"/>
<path d="M4 19 Q10 16 16 17 L22 19 Q25 24 24 32 H6 Q2 26 4 19 Z" fill="#f1ece6"/>
<path d="M12.6 12 H17.6 L18 18 Q15 20 12.8 18 Z" fill="#d9a88c"/>
<path d="M18 18 L26 16 L28 26 L19 28 Z" fill="#efefef"/>
<path d="M2 24 Q8 22 12 26 Q12 30 10 32 H2 Z" fill="#c98a54"/>
<path d="M13 8 Q11.4 14 12.6 19 M18.4 7 Q20.4 14 19.6 20" stroke="#1c1514" stroke-width="2.2" fill="none"/>
</g>
<circle cx="28" cy="26.4" r="4.3" fill="#fff"/>
<circle cx="27.9" cy="26.3" r="2.55" fill="none" stroke="#2f97dc" stroke-width="1.7" stroke-dasharray="13.2 2.82" transform="rotate(72 27.9 26.3)"/>
<rect x="28.5" y="28.3" width="1.8" height="1.8" fill="#f28a2c" transform="rotate(35 29.4 29.2)"/>
</svg>

<svg style="left:71px;top:537.9px" width="33" height="33" viewBox="0 0 33 33">
<defs><clipPath id="cav2"><circle cx="16" cy="16" r="16"/></clipPath></defs>
<g clip-path="url(#cav2)">
<rect width="32" height="32" fill="#f0ebe6"/>
<path d="M8 10 Q9 2 16 1.6 Q23 2 24 10 Q25.6 18 24 28 L20 30 L12 30 L8 28 Q6.4 18 8 10 Z" fill="#e2c79c"/>
<path d="M11.6 9 Q12 4.6 16 4.6 Q20.4 5 20.6 10 Q20.6 15 18.4 17.6 Q16 19 14 17.6 Q11.6 14 11.6 9 Z" fill="#e0ab8c"/>
<path d="M13.6 13.6 Q16 15 18.6 13.6 Q17.6 15.8 16 15.8 Q14.4 15.8 13.6 13.6 Z" fill="#f6f0ea"/>
<path d="M4 26 Q10 20 14 21 L16 24 L18 21 Q24 20 28 26 L30 32 H2 Z" fill="#dca583"/>
<path d="M13 18 H19 L19 23 Q16 26 13 23 Z" fill="#d89f80"/>
<path d="M10 8 Q9 16 10.6 26 M22 8 Q23.4 16 21.6 26" stroke="#dcc092" stroke-width="2.4" fill="none"/>
</g>
</svg>

</div>
</body>
</html>
